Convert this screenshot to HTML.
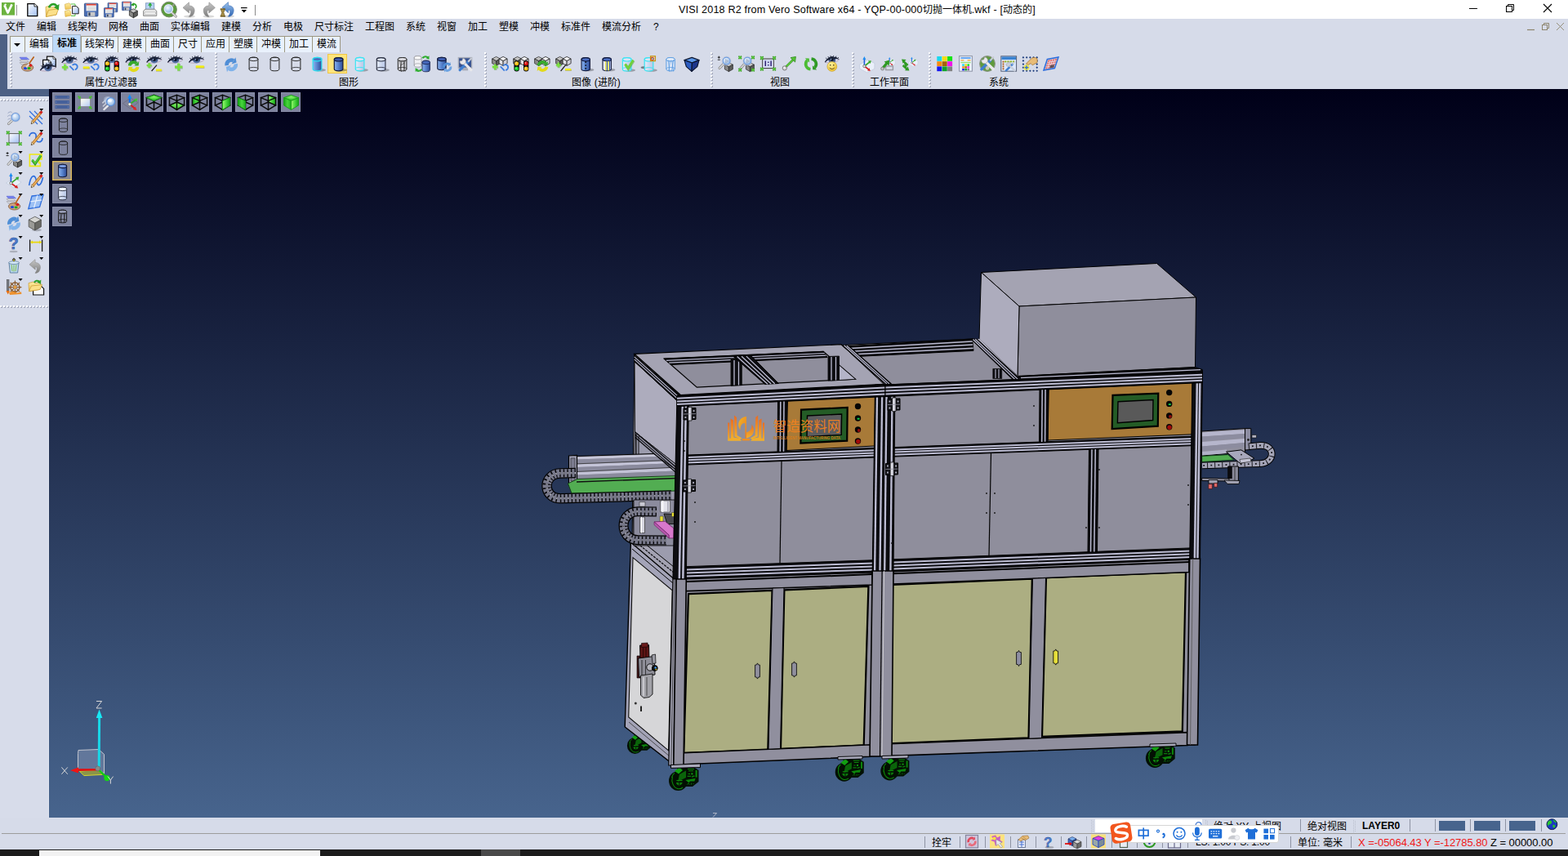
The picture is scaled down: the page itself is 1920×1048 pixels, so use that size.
<!DOCTYPE html><html><head><meta charset="utf-8"><title>VISI</title><style>
*{margin:0;padding:0;box-sizing:border-box}
html,body{width:1920px;height:1048px;overflow:hidden;background:#d6dbe9;font-family:"Liberation Sans",sans-serif;font-size:12px;color:#000}
.abs{position:absolute}
#title{left:0;top:0;width:1920px;height:23px;background:#fff}
#menubar{left:0;top:23px;width:1920px;height:20px;background:#d6dbe9}
.mi{position:absolute;top:26px;font-size:12px;line-height:14px;white-space:nowrap;color:#000}
#stripe{left:0;top:42px;width:9px;height:67px;background:#4d6084}
#band{left:0;top:109px;width:60px;height:9px;background:#4d6084}
#tabs{left:12px;top:44px;height:20px}
.tab{position:absolute;top:44px;height:20px;background:#e9f1fc;border-left:1px solid #9c9782;border-top:1px solid #9c9782;font-size:12px;line-height:18px;text-align:center;white-space:nowrap;overflow:hidden}
.tab.act{top:42px;height:22px;background:#bdd9f8;border:1px solid #a8b6c8;border-bottom:none;font-weight:bold;line-height:20px}
#toolbar{left:9px;top:64px;width:1911px;height:45px;background:#d6dbe9}
.glabel{position:absolute;top:95px;font-size:12px;line-height:13px;white-space:nowrap;transform:translateX(-50%)}
.grip{position:absolute;top:64px;width:2px;height:44px;background-image:repeating-linear-gradient(to bottom,#fff 0,#fff 2px,transparent 2px,transparent 4px)}
.grips{position:absolute;top:65px;width:2px;height:43px;background-image:repeating-linear-gradient(to bottom,#a4a9ba 0,#a4a9ba 2px,transparent 2px,transparent 4px)}
#viewport{left:60px;top:109px;width:1860px;height:892px;background:linear-gradient(to bottom,#000018 0%,#47648d 100%)}
#leftpanel{left:0;top:118px;width:60px;height:883px;background:#d7dcea;border-top:1px solid #e6eaf4;border-right:1px solid #e2e6f1}
.hgrip{position:absolute;left:0;width:58px;height:2px;background-image:repeating-linear-gradient(to right,#fff 0,#fff 2px,transparent 2px,transparent 4px)}
.hgrips{position:absolute;left:1px;width:58px;height:2px;background-image:repeating-linear-gradient(to right,#a4a9ba 0,#a4a9ba 2px,transparent 2px,transparent 4px)}
.vb{position:absolute;width:24px;height:24px;background:#7e839e;box-shadow:inset 0 0 0 1px #8a8fa9}
.vb.act{background:#8a8890;box-shadow:inset 0 0 0 1.5px #d8b65c}
#status{left:0;top:1001px;width:1920px;height:39px;background:#d6dbe9}
#taskbar{left:0;top:1040px;width:1920px;height:8px;background:#1c1c1c}
.st{position:absolute;font-size:13px;line-height:15px;white-space:nowrap}
.sep{position:absolute;width:1px;background:#8e93a3}
.tx{font-family:"Liberation Sans","Noto Sans CJK SC",sans-serif;font-size:12px;fill:#000}
</style></head><body>
<div class="abs" id="title"></div>
<svg class="abs" style="left:0;top:0" width="330" height="23" viewBox="0 0 330 23"><rect x="2" y="3" width="16" height="15.6" fill="#6cb33f"/><path d="M5.4,6.4 L9.6,15.6 L14.6,5.4" stroke="#fff" stroke-width="2.6" fill="none" stroke-linejoin="round"/><circle cx="6.6" cy="5.6" r="1.2" fill="#fff"/><path d="M20.5,6 V19" stroke="#9a9a9a" stroke-width="1"/><path d="M33.8,4.6 H42 L45.8,8 V19.6 H33.8 Z" fill="url(#gDoc)" stroke="#000" stroke-width="1.3"/><path d="M42,4.6 V8 H45.8" fill="#fff" stroke="#000" stroke-width="0.8"/><path d="M56,8.4 L61,7.2 L62.4,9 L70,8.4 L69,18 L56.4,20.4 Z" fill="url(#gFolder)" stroke="#c89a30" stroke-width="0.7"/><path d="M56.4,20.4 L59.4,12.4 L71.6,10.8 L69,18 Z" fill="#fbe08a" stroke="#c89a30" stroke-width="0.7"/><path d="M60,9.4 C61.6,4.8 67,3.6 69.6,7.6" stroke="#2ea02a" stroke-width="2.6" fill="none"/><polygon points="72.6,5 71.8,12.6 66,9" fill="#2ea02a"/><path d="M79.4,5.2 L84.6,3.8 L86.2,5.2 L87,10.6 L80,11.6 Z" fill="url(#gFolder)" stroke="#d2a840" stroke-width="0.6"/><path d="M79.4,13.6 L84.6,12.2 L86.2,13.6 L87,19 L80,20.4 Z" fill="url(#gFolder)" stroke="#d2a840" stroke-width="0.6"/><path d="M86.6,5 H92 V8 M92,16.6 V19.4 H87" stroke="#52c044" stroke-width="1" fill="none"/><path d="M88.6,7.6 H93.6 L96.2,10.2 V16.8 H88.6 Z" fill="url(#gDoc)" stroke="#222" stroke-width="1"/><g transform="translate(103.4,4.2) scale(1.0)"><rect x="0" y="0" width="16.6" height="15.8" rx="1" fill="#4a6eb4" stroke="#2c4680" stroke-width="0.8"/><rect x="2.2" y="0.6" width="12.2" height="8.6" fill="#f4f4f4"/><rect x="2.2" y="0.6" width="12.2" height="1.8" fill="#e04a3a"/><path d="M3.4,4.4 H13.4 M3.4,6.2 H13.4 M3.4,7.8 H13.4" stroke="#b8b8b8" stroke-width="0.6"/><rect x="3.8" y="10.6" width="9.2" height="5" fill="#c8c8c8"/><rect x="5" y="11.2" width="2.2" height="3.8" fill="#2c3c5c"/></g><g transform="translate(132,3.4) scale(0.72)"><rect x="0" y="0" width="16.6" height="15.8" rx="1" fill="#4a6eb4" stroke="#2c4680" stroke-width="0.8"/><rect x="2.2" y="0.6" width="12.2" height="8.6" fill="#f4f4f4"/><rect x="2.2" y="0.6" width="12.2" height="1.8" fill="#e04a3a"/><path d="M3.4,4.4 H13.4 M3.4,6.2 H13.4 M3.4,7.8 H13.4" stroke="#b8b8b8" stroke-width="0.6"/><rect x="3.8" y="10.6" width="9.2" height="5" fill="#c8c8c8"/><rect x="5" y="11.2" width="2.2" height="3.8" fill="#2c3c5c"/></g><g transform="translate(127.4,9.6) scale(0.72)"><rect x="0" y="0" width="16.6" height="15.8" rx="1" fill="#4a6eb4" stroke="#2c4680" stroke-width="0.8"/><rect x="2.2" y="0.6" width="12.2" height="8.6" fill="#f4f4f4"/><rect x="2.2" y="0.6" width="12.2" height="1.8" fill="#e04a3a"/><path d="M3.4,4.4 H13.4 M3.4,6.2 H13.4 M3.4,7.8 H13.4" stroke="#b8b8b8" stroke-width="0.6"/><rect x="3.8" y="10.6" width="9.2" height="5" fill="#c8c8c8"/><rect x="5" y="11.2" width="2.2" height="3.8" fill="#2c3c5c"/></g><g transform="translate(149.4,2) scale(0.68)"><rect x="0" y="0" width="16.6" height="15.8" rx="1" fill="#4a6eb4" stroke="#2c4680" stroke-width="0.8"/><rect x="2.2" y="0.6" width="12.2" height="8.6" fill="#f4f4f4"/><rect x="2.2" y="0.6" width="12.2" height="1.8" fill="#e04a3a"/><path d="M3.4,4.4 H13.4 M3.4,6.2 H13.4 M3.4,7.8 H13.4" stroke="#b8b8b8" stroke-width="0.6"/><rect x="3.8" y="10.6" width="9.2" height="5" fill="#c8c8c8"/><rect x="5" y="11.2" width="2.2" height="3.8" fill="#2c3c5c"/></g><path d="M161.4,6.2 C163.4,3.8 166.2,4.6 166.8,7.2 C167,8.6 166.4,9.8 165.4,10.4" stroke="#2ea02a" stroke-width="1.7" fill="none"/><polygon points="160,6.2 164,3.2 164.2,7.6" fill="#2ea02a"/><g transform="translate(158.4,10.8) scale(1.0)"><polygon points="0,2.6 5,0 10,2.6 5,5.2" fill="#c4c4c4" stroke="#222" stroke-width="0.7"/><polygon points="0,2.6 5,5.2 5,11 0,8.2" fill="#8a8a88" stroke="#222" stroke-width="0.7"/><polygon points="10,2.6 5,5.2 5,11 10,8.2" fill="#5c5c5a" stroke="#222" stroke-width="0.7"/></g><rect x="178.6" y="3.8" width="10.2" height="8.6" fill="#b8d2f6" stroke="#6a86b0" stroke-width="0.7"/><path d="M183.6,9.2 V6.6 H181.6 L183.8,3.4 L186,6.6 H184.2 V9.2 Z" fill="#22c02a" stroke="#148018" stroke-width="0.4"/><path d="M175.6,13.4 L178,11.2 H189.4 L191.8,13.4 V19.4 H175.6 Z" fill="#e6e6e6" stroke="#6e6e6e" stroke-width="0.8"/><rect x="177" y="15" width="13.4" height="2.6" fill="#fafafa" stroke="#9a9a9a" stroke-width="0.5"/><circle cx="207" cy="11.6" r="9.4" fill="#5b9a3c" stroke="#7a8a72" stroke-width="1"/><path d="M210.6,15.6 L215.4,20.2" stroke="#9a9a9a" stroke-width="3" stroke-linecap="round"/><path d="M210.6,15.6 L215.4,20.2" stroke="#e8e8e8" stroke-width="1.2" stroke-linecap="round"/><circle cx="206.4" cy="11" r="5.2" fill="url(#gLens)" stroke="#dfe6f0" stroke-width="1.4"/><path d="M210.4,6.4 L213.4,4.2 L213,8 Z" fill="#9a9a9a"/><g transform="translate(224,2.8)"><ellipse cx="8" cy="17.4" rx="7" ry="1.6" fill="#000" opacity="0.15"/><path d="M0,6.6 L7.4,0 L7.6,4.2 C13.6,4.2 16.2,9.6 12.4,15.6 C9.6,18.2 7.4,17.6 7.4,17.6 C10.6,13.4 10.4,9.6 7.6,9.4 L7.6,13.2 Z" fill="url(#gGreyArrow)" stroke="#8a8a8a" stroke-width="0.6"/></g><g transform="translate(263.4,2.8) scale(-1,1)"><ellipse cx="8" cy="17.4" rx="7" ry="1.6" fill="#000" opacity="0.15"/><path d="M0,6.6 L7.4,0 L7.6,4.2 C13.6,4.2 16.2,9.6 12.4,15.6 C9.6,18.2 7.4,17.6 7.4,17.6 C10.6,13.4 10.4,9.6 7.6,9.4 L7.6,13.2 Z" fill="url(#gGreyArrow)" stroke="#8a8a8a" stroke-width="0.6"/></g><g transform="translate(272,2.6)"><ellipse cx="8" cy="17.4" rx="7" ry="1.6" fill="#000" opacity="0.15"/><path d="M0,6.6 L7.4,0 L7.6,4.2 C13.6,4.2 16.2,9.6 12.4,15.6 C9.6,18.2 7.4,17.6 7.4,17.6 C10.6,13.4 10.4,9.6 7.6,9.4 L7.6,13.2 Z" fill="url(#gBlueArrow)" stroke="#3a6cb4" stroke-width="0.6"/></g><path d="M270.2,11 H275.4 L273.8,15.4 L275.4,20 H270.2 L271.8,15.4 Z" fill="#a8904a" stroke="#6e5a20" stroke-width="0.8"/><path d="M269.6,11 H276 M269.6,20 H276" stroke="#6e5a20" stroke-width="1.2"/><path d="M295,9.6 H302.6" stroke="#000" stroke-width="1.2"/><polygon points="295.6,12 302,12 298.8,15.4" fill="#000"/><path d="M312.5,6 V19" stroke="#8a8a8a" stroke-width="1"/></svg>
<div class="abs" id="t1" style="left:831px;top:4.5px;font-size:12.6px;line-height:15px;white-space:nowrap;letter-spacing:0.16px">VISI 2018 R2 from Vero Software x64 - YQP-00-000</div>
<svg class="abs" style="left:1128px;top:1px" width="65" height="22" viewBox="1128 1 65 22"><text class="tx" x="1130" y="16">切抛一体机</text></svg>
<div class="abs" id="t3" style="left:1189.7px;top:4.5px;font-size:12.6px;line-height:15px;white-space:nowrap;letter-spacing:0.16px">.wkf - [</div>
<svg class="abs" style="left:1226px;top:1px" width="41" height="22" viewBox="1226 1 41 22"><text class="tx" x="1228" y="16">动态的</text></svg>
<div class="abs" id="t5" style="left:1264.3px;top:4.5px;font-size:12.6px;line-height:15px;white-space:nowrap;letter-spacing:0.16px">]</div>
<div class="abs" id="menubar"></div>
<svg class="abs" style="left:5px;top:22px" width="29" height="22" viewBox="5 22 29 22"><text class="tx" x="7" y="37">文件</text></svg>
<svg class="abs" style="left:43px;top:22px" width="29" height="22" viewBox="43 22 29 22"><text class="tx" x="45" y="37">编辑</text></svg>
<svg class="abs" style="left:81px;top:22px" width="41" height="22" viewBox="81 22 41 22"><text class="tx" x="83" y="37">线架构</text></svg>
<svg class="abs" style="left:131px;top:22px" width="29" height="22" viewBox="131 22 29 22"><text class="tx" x="133" y="37">网格</text></svg>
<svg class="abs" style="left:169px;top:22px" width="29" height="22" viewBox="169 22 29 22"><text class="tx" x="171" y="37">曲面</text></svg>
<svg class="abs" style="left:207px;top:22px" width="53" height="22" viewBox="207 22 53 22"><text class="tx" x="209" y="37">实体编辑</text></svg>
<svg class="abs" style="left:269px;top:22px" width="29" height="22" viewBox="269 22 29 22"><text class="tx" x="271" y="37">建模</text></svg>
<svg class="abs" style="left:307px;top:22px" width="29" height="22" viewBox="307 22 29 22"><text class="tx" x="309" y="37">分析</text></svg>
<svg class="abs" style="left:345px;top:22px" width="29" height="22" viewBox="345 22 29 22"><text class="tx" x="347" y="37">电极</text></svg>
<svg class="abs" style="left:383px;top:22px" width="53" height="22" viewBox="383 22 53 22"><text class="tx" x="385" y="37">尺寸标注</text></svg>
<svg class="abs" style="left:445px;top:22px" width="41" height="22" viewBox="445 22 41 22"><text class="tx" x="447" y="37">工程图</text></svg>
<svg class="abs" style="left:495px;top:22px" width="29" height="22" viewBox="495 22 29 22"><text class="tx" x="497" y="37">系统</text></svg>
<svg class="abs" style="left:533px;top:22px" width="29" height="22" viewBox="533 22 29 22"><text class="tx" x="535" y="37">视窗</text></svg>
<svg class="abs" style="left:571px;top:22px" width="29" height="22" viewBox="571 22 29 22"><text class="tx" x="573" y="37">加工</text></svg>
<svg class="abs" style="left:609px;top:22px" width="29" height="22" viewBox="609 22 29 22"><text class="tx" x="611" y="37">塑模</text></svg>
<svg class="abs" style="left:647px;top:22px" width="29" height="22" viewBox="647 22 29 22"><text class="tx" x="649" y="37">冲模</text></svg>
<svg class="abs" style="left:685px;top:22px" width="41" height="22" viewBox="685 22 41 22"><text class="tx" x="687" y="37">标准件</text></svg>
<svg class="abs" style="left:735px;top:22px" width="53" height="22" viewBox="735 22 53 22"><text class="tx" x="737" y="37">模流分析</text></svg>
<div class="mi" style="left:800px">?</div>
<svg class="abs" style="left:0;top:0" width="1920" height="44" viewBox="0 0 1920 44"><path d="M1799,10.5 H1809" stroke="#000" stroke-width="1"/><rect x="1844.5" y="7.5" width="7" height="7" fill="#fff" stroke="#000" stroke-width="1"/><path d="M1846.5,7.5 V5.5 H1853.5 V12.5 H1851.5" fill="none" stroke="#000" stroke-width="1"/><path d="M1890,5 L1900,15 M1900,5 L1890,15" stroke="#000" stroke-width="1.1"/><path d="M1870,36.5 H1879" stroke="#8c846c" stroke-width="1.2"/><rect x="1888.5" y="30.5" width="6" height="6" fill="#d6dbe9" stroke="#8c846c" stroke-width="1"/><path d="M1890.5,30.5 V28.5 H1896.5 V34.5 H1894.5" fill="none" stroke="#8c846c" stroke-width="1"/><path d="M1906,28 L1915,37 M1915,28 L1906,37" stroke="#8c846c" stroke-width="0.9"/></svg>
<div class="abs" id="toolbar"></div>
<div class="abs" id="stripe"></div><div class="abs" id="band"></div>
<div class="tab" style="left:12px;width:18px"><svg width="18" height="19" style="display:block"><path d="M4,8 L12,8 L8,12 Z" fill="#000"/></svg></div>
<div class="tab" style="left:30px;width:34px"></div>
<svg class="abs" style="left:33px;top:43px" width="30" height="22" viewBox="33 43 30 22"><text class="tx" x="36" y="58">编辑</text></svg>
<div class="tab act" style="left:64px;width:35px"></div>
<svg class="abs" style="left:68px;top:42px" width="29" height="22" viewBox="68 42 29 22"><text class="tx" x="70" y="57" font-weight="bold">标准</text></svg>
<div class="tab" style="left:99px;width:45px"></div>
<svg class="abs" style="left:102px;top:43px" width="41" height="22" viewBox="102 43 41 22"><text class="tx" x="104" y="58">线架构</text></svg>
<div class="tab" style="left:144px;width:34px"></div>
<svg class="abs" style="left:147px;top:43px" width="30" height="22" viewBox="147 43 30 22"><text class="tx" x="150" y="58">建模</text></svg>
<div class="tab" style="left:178px;width:34px"></div>
<svg class="abs" style="left:181px;top:43px" width="30" height="22" viewBox="181 43 30 22"><text class="tx" x="184" y="58">曲面</text></svg>
<div class="tab" style="left:212px;width:34px"></div>
<svg class="abs" style="left:215px;top:43px" width="30" height="22" viewBox="215 43 30 22"><text class="tx" x="218" y="58">尺寸</text></svg>
<div class="tab" style="left:246px;width:34px"></div>
<svg class="abs" style="left:249px;top:43px" width="30" height="22" viewBox="249 43 30 22"><text class="tx" x="252" y="58">应用</text></svg>
<div class="tab" style="left:280px;width:34px"></div>
<svg class="abs" style="left:283px;top:43px" width="30" height="22" viewBox="283 43 30 22"><text class="tx" x="286" y="58">塑膜</text></svg>
<div class="tab" style="left:314px;width:34px"></div>
<svg class="abs" style="left:317px;top:43px" width="30" height="22" viewBox="317 43 30 22"><text class="tx" x="320" y="58">冲模</text></svg>
<div class="tab" style="left:348px;width:34px"></div>
<svg class="abs" style="left:351px;top:43px" width="30" height="22" viewBox="351 43 30 22"><text class="tx" x="354" y="58">加工</text></svg>
<div class="tab" style="left:382px;width:34px"></div>
<svg class="abs" style="left:385px;top:43px" width="30" height="22" viewBox="385 43 30 22"><text class="tx" x="388" y="58">模流</text></svg>
<div class="abs" style="left:416px;top:44px;width:1px;height:20px;background:#9c9782"></div>
<div class="grips" style="left:13px"></div><div class="grip" style="left:12px"></div>
<div class="grips" style="left:264px"></div><div class="grip" style="left:263px"></div>
<div class="grips" style="left:594px"></div><div class="grip" style="left:593px"></div>
<div class="grips" style="left:871px"></div><div class="grip" style="left:870px"></div>
<div class="grips" style="left:1044px"></div><div class="grip" style="left:1043px"></div>
<div class="grips" style="left:1138px"></div><div class="grip" style="left:1137px"></div>
<svg class="abs" style="left:102px;top:90px" width="69" height="22" viewBox="102 90 69 22"><text class="tx" y="105"><tspan x="104">属性</tspan><tspan x="128.33">/</tspan><tspan x="132">过滤器</tspan></text></svg>
<svg class="abs" style="left:413px;top:90px" width="29" height="22" viewBox="413 90 29 22"><text class="tx" x="415" y="105">图形</text></svg>
<svg class="abs" style="left:698px;top:90px" width="65" height="22" viewBox="698 90 65 22"><text class="tx" y="105"><tspan x="700">图像</tspan><tspan x="727.67">(</tspan><tspan x="732">进阶</tspan><tspan x="755.67">)</tspan></text></svg>
<svg class="abs" style="left:941px;top:90px" width="29" height="22" viewBox="941 90 29 22"><text class="tx" x="943" y="105">视图</text></svg>
<svg class="abs" style="left:1063px;top:90px" width="53" height="22" viewBox="1063 90 53 22"><text class="tx" x="1065" y="105">工作平面</text></svg>
<svg class="abs" style="left:1209px;top:90px" width="29" height="22" viewBox="1209 90 29 22"><text class="tx" x="1211" y="105">系统</text></svg>
<svg width="0" height="0" style="position:absolute"><defs>
<linearGradient id="gBlueCyl" x1="0" x2="1" y1="0" y2="0"><stop offset="0" stop-color="#8db4ee"/><stop offset="0.45" stop-color="#5a86d0"/><stop offset="1" stop-color="#2d4a94"/></linearGradient>
<linearGradient id="gLightCyl" x1="0" x2="1" y1="0" y2="0"><stop offset="0" stop-color="#e4ebf8"/><stop offset="1" stop-color="#b7c6e6"/></linearGradient>
<linearGradient id="gDoc" x1="0" x2="1" y1="0" y2="1"><stop offset="0" stop-color="#ffffff"/><stop offset="1" stop-color="#9fbdf2"/></linearGradient>
<linearGradient id="gFolder" x1="0" x2="0" y1="0" y2="1"><stop offset="0" stop-color="#fdeea6"/><stop offset="1" stop-color="#f0c24c"/></linearGradient>
<linearGradient id="gGreyArrow" x1="0" x2="0" y1="0" y2="1"><stop offset="0" stop-color="#c9c9c9"/><stop offset="1" stop-color="#7c7c7c"/></linearGradient>
<linearGradient id="gBlueArrow" x1="0" x2="0" y1="0" y2="1"><stop offset="0" stop-color="#9cc4ee"/><stop offset="1" stop-color="#2f66b4"/></linearGradient>
<radialGradient id="gLens" cx="0.4" cy="0.35" r="0.7"><stop offset="0" stop-color="#f4f9ff"/><stop offset="1" stop-color="#86b0e2"/></radialGradient>
<radialGradient id="gSmile" cx="0.4" cy="0.3" r="0.8"><stop offset="0" stop-color="#fff6a0"/><stop offset="1" stop-color="#e8b820"/></radialGradient>
<linearGradient id="gGreenCube" x1="0" x2="1" y1="0" y2="1"><stop offset="0" stop-color="#5cf05c"/><stop offset="1" stop-color="#0fa010"/></linearGradient>
<linearGradient id="gEyeIris" x1="0" x2="0" y1="0" y2="1"><stop offset="0" stop-color="#1f2c4c"/><stop offset="1" stop-color="#5c7cb4"/></linearGradient>
</defs></svg><svg class="abs" style="left:0;top:0" width="1920" height="110" viewBox="0 0 1920 110"><g transform="translate(23,68)"><path d="M1,2.2 L9.5,2.2 L12.5,4.8 L3.2,4.8 Z" fill="#6f7df2" stroke="#4c57c8" stroke-width="0.5"/><path d="M1.2,5.6 L9.8,5.6 L12,7.8 L3,7.8 Z" fill="#e6e6ea" stroke="#7a7a80" stroke-width="0.5"/><path d="M1.2,8.6 L9.8,8.6 L11.6,10.8 L3,10.8 Z" fill="#e6e6ea" stroke="#7a7a80" stroke-width="0.5"/><ellipse cx="10.6" cy="14.6" rx="7.2" ry="4.6" fill="#c9a07c" stroke="#7d5a40" stroke-width="0.8"/><ellipse cx="14.4" cy="12" rx="2" ry="1.7" fill="#d81d1d"/><ellipse cx="8" cy="15.6" rx="2.1" ry="1.6" fill="#1d46e0"/><ellipse cx="12.6" cy="15.6" rx="2" ry="1.5" fill="#16b01c"/><path d="M18.2,2 L11.6,11.4" stroke="#b8631c" stroke-width="1.7" stroke-linecap="round"/><path d="M12,10.8 L9.6,13.6" stroke="#d9d9df" stroke-width="2" stroke-linecap="round"/></g><g transform="translate(49,68)"><path d="M8.5,1.2 H16 L19.2,4.2 V14 H8.5 Z" fill="url(#gDoc)" stroke="#111" stroke-width="1.3"/><path d="M16,1.2 V4.2 H19.2" fill="#fff" stroke="#111" stroke-width="0.7"/><path d="M3.6,5.4 H10.4 L13.4,8.2 V16 H3.6 Z" fill="url(#gDoc)" stroke="#111" stroke-width="1.3"/><path d="M10.4,5.4 V8.2 H13.4" fill="#fff" stroke="#111" stroke-width="0.7"/><g transform="translate(0,10.2) scale(1.0,1.035294117647059)"><path d="M0.3,7.6 C4,1.2 14,-0.4 19.6,4.2 C15.5,8.8 5,9.4 0.3,7.6 Z" fill="#d6d8ee" stroke="#9a7488" stroke-width="0.5"/><ellipse cx="9.9" cy="4.7" rx="4.7" ry="4" fill="url(#gEyeIris)"/><ellipse cx="9.9" cy="4.4" rx="1.9" ry="1.8" fill="#0c1424"/><path d="M0.3,7.6 C3.6,0.2 14.4,-2 19.8,4.2 C15,2.4 6.4,3 0.3,7.6 Z" fill="#1a2238"/><path d="M0.3,7.6 C4,1.8 8,0.6 11,0.6" stroke="#1a2238" stroke-width="1.2" fill="none"/><path d="M2.5,3.6 L1.6,1.8 M5,1.8 L4.4,0 M8,0.8 L7.8,-1 M11.5,0.6 L11.9,-1.1 M14.6,1.2 L15.6,-0.4 M17.4,2.5 L18.9,1.2" stroke="#1a2238" stroke-width="0.9"/><circle cx="8.4" cy="3.8" r="0.8" fill="#a8c0ee"/></g></g><g transform="translate(75,68)"><g transform="translate(0.5,1.2) scale(0.975,0.9882352941176471)"><path d="M0.3,7.6 C4,1.2 14,-0.4 19.6,4.2 C15.5,8.8 5,9.4 0.3,7.6 Z" fill="#d6d8ee" stroke="#9a7488" stroke-width="0.5"/><ellipse cx="9.9" cy="4.7" rx="4.7" ry="4" fill="url(#gEyeIris)"/><ellipse cx="9.9" cy="4.4" rx="1.9" ry="1.8" fill="#0c1424"/><path d="M0.3,7.6 C3.6,0.2 14.4,-2 19.8,4.2 C15,2.4 6.4,3 0.3,7.6 Z" fill="#1a2238"/><path d="M0.3,7.6 C4,1.8 8,0.6 11,0.6" stroke="#1a2238" stroke-width="1.2" fill="none"/><path d="M2.5,3.6 L1.6,1.8 M5,1.8 L4.4,0 M8,0.8 L7.8,-1 M11.5,0.6 L11.9,-1.1 M14.6,1.2 L15.6,-0.4 M17.4,2.5 L18.9,1.2" stroke="#1a2238" stroke-width="0.9"/><circle cx="8.4" cy="3.8" r="0.8" fill="#a8c0ee"/></g><path d="M0.8000000000000003,14.2 H8.0 M4.4,10.6 V17.8" stroke="#3c7d16" stroke-width="3.3" opacity="0.35" transform="translate(0.6,0.7)"/><path d="M0.8000000000000003,14.2 H8.0 M4.4,10.6 V17.8" stroke="#7be040" stroke-width="2.4"/><g transform="translate(10.4,9.6)"><path d="M0,3.2 L5,8.4" stroke="#3b7de0" stroke-width="1.8" fill="none"/><path d="M3.2,2.2 C6.5,-0.8 10.4,2 9,5.6 C8.4,7 7.4,7.6 6.4,7.8" stroke="#3b7de0" stroke-width="1.8" fill="none"/></g></g><g transform="translate(101,68)"><g transform="translate(0.5,1.6) scale(0.975,0.9411764705882353)"><path d="M0.3,7.6 C4,1.2 14,-0.4 19.6,4.2 C15.5,8.8 5,9.4 0.3,7.6 Z" fill="#d6d8ee" stroke="#9a7488" stroke-width="0.5"/><ellipse cx="9.9" cy="4.7" rx="4.7" ry="4" fill="url(#gEyeIris)"/><ellipse cx="9.9" cy="4.4" rx="1.9" ry="1.8" fill="#0c1424"/><path d="M0.3,7.6 C3.6,0.2 14.4,-2 19.8,4.2 C15,2.4 6.4,3 0.3,7.6 Z" fill="#1a2238"/><path d="M0.3,7.6 C4,1.8 8,0.6 11,0.6" stroke="#1a2238" stroke-width="1.2" fill="none"/><path d="M2.5,3.6 L1.6,1.8 M5,1.8 L4.4,0 M8,0.8 L7.8,-1 M11.5,0.6 L11.9,-1.1 M14.6,1.2 L15.6,-0.4 M17.4,2.5 L18.9,1.2" stroke="#1a2238" stroke-width="0.9"/><circle cx="8.4" cy="3.8" r="0.8" fill="#a8c0ee"/></g><path d="M0.7999999999999998,15.5 H8.999999999999998" stroke="#9a9210" stroke-width="2.4" opacity="0.5"/><path d="M0.7999999999999998,14.6 H8.399999999999999" stroke="#f2ee10" stroke-width="2.4"/><g transform="translate(10.4,9.6)"><path d="M0,3.2 L5,8.4" stroke="#3b7de0" stroke-width="1.8" fill="none"/><path d="M3.2,2.2 C6.5,-0.8 10.4,2 9,5.6 C8.4,7 7.4,7.6 6.4,7.8" stroke="#3b7de0" stroke-width="1.8" fill="none"/></g></g><g transform="translate(127,68)"><g transform="translate(1.5,1.2) scale(0.85,0.8941176470588235)"><path d="M0.3,7.6 C4,1.2 14,-0.4 19.6,4.2 C15.5,8.8 5,9.4 0.3,7.6 Z" fill="#d6d8ee" stroke="#9a7488" stroke-width="0.5"/><ellipse cx="9.9" cy="4.7" rx="4.7" ry="4" fill="url(#gEyeIris)"/><ellipse cx="9.9" cy="4.4" rx="1.9" ry="1.8" fill="#0c1424"/><path d="M0.3,7.6 C3.6,0.2 14.4,-2 19.8,4.2 C15,2.4 6.4,3 0.3,7.6 Z" fill="#1a2238"/><path d="M0.3,7.6 C4,1.8 8,0.6 11,0.6" stroke="#1a2238" stroke-width="1.2" fill="none"/><path d="M2.5,3.6 L1.6,1.8 M5,1.8 L4.4,0 M8,0.8 L7.8,-1 M11.5,0.6 L11.9,-1.1 M14.6,1.2 L15.6,-0.4 M17.4,2.5 L18.9,1.2" stroke="#1a2238" stroke-width="0.9"/><circle cx="8.4" cy="3.8" r="0.8" fill="#a8c0ee"/></g><rect x="1.2" y="6.2" width="6.4" height="13.4" rx="3" fill="#0c0c0c"/><circle cx="4.4" cy="9.7" r="2.5" fill="#f6c010"/><circle cx="3.8" cy="9.0" r="0.9" fill="#fff" opacity="0.55"/><circle cx="4.4" cy="16.1" r="2.5" fill="#10d020"/><circle cx="3.8" cy="15.4" r="0.9" fill="#fff" opacity="0.55"/><rect x="12.6" y="6.2" width="6.4" height="13.4" rx="3" fill="#0c0c0c"/><circle cx="15.8" cy="9.7" r="2.5" fill="#e01010"/><circle cx="15.2" cy="9.0" r="0.9" fill="#fff" opacity="0.55"/><circle cx="15.8" cy="16.1" r="2.5" fill="#f6c010"/><circle cx="15.2" cy="15.4" r="0.9" fill="#fff" opacity="0.55"/></g><g transform="translate(153,68)"><g transform="translate(0.6,1.2) scale(0.93,0.9411764705882353)"><path d="M0.3,7.6 C4,1.2 14,-0.4 19.6,4.2 C15.5,8.8 5,9.4 0.3,7.6 Z" fill="#d6d8ee" stroke="#9a7488" stroke-width="0.5"/><ellipse cx="9.9" cy="4.7" rx="4.7" ry="4" fill="url(#gEyeIris)"/><ellipse cx="9.9" cy="4.4" rx="1.9" ry="1.8" fill="#0c1424"/><path d="M0.3,7.6 C3.6,0.2 14.4,-2 19.8,4.2 C15,2.4 6.4,3 0.3,7.6 Z" fill="#1a2238"/><path d="M0.3,7.6 C4,1.8 8,0.6 11,0.6" stroke="#1a2238" stroke-width="1.2" fill="none"/><path d="M2.5,3.6 L1.6,1.8 M5,1.8 L4.4,0 M8,0.8 L7.8,-1 M11.5,0.6 L11.9,-1.1 M14.6,1.2 L15.6,-0.4 M17.4,2.5 L18.9,1.2" stroke="#1a2238" stroke-width="0.9"/><circle cx="8.4" cy="3.8" r="0.8" fill="#a8c0ee"/></g><g transform="rotate(-12 10.6 13.2)"><path d="M5.90,11.49 A5.0,5.0 0 0 1 14.93,10.70" fill="none" stroke="#35a82c" stroke-width="3.8"/><polygon points="18.39,8.70 11.47,12.70 16.64,13.66" fill="#35a82c"/><path d="M15.30,14.91 A5.0,5.0 0 0 1 6.27,15.70" fill="none" stroke="#e2da18" stroke-width="3.8"/><polygon points="2.81,17.70 9.73,13.71 4.56,12.74" fill="#e2da18"/></g></g><g transform="translate(179,68)"><g transform="translate(0.4,1.2) scale(0.96,0.9411764705882353)"><path d="M0.3,7.6 C4,1.2 14,-0.4 19.6,4.2 C15.5,8.8 5,9.4 0.3,7.6 Z" fill="#d6d8ee" stroke="#9a7488" stroke-width="0.5"/><ellipse cx="9.9" cy="4.7" rx="4.7" ry="4" fill="url(#gEyeIris)"/><ellipse cx="9.9" cy="4.4" rx="1.9" ry="1.8" fill="#0c1424"/><path d="M0.3,7.6 C3.6,0.2 14.4,-2 19.8,4.2 C15,2.4 6.4,3 0.3,7.6 Z" fill="#1a2238"/><path d="M0.3,7.6 C4,1.8 8,0.6 11,0.6" stroke="#1a2238" stroke-width="1.2" fill="none"/><path d="M2.5,3.6 L1.6,1.8 M5,1.8 L4.4,0 M8,0.8 L7.8,-1 M11.5,0.6 L11.9,-1.1 M14.6,1.2 L15.6,-0.4 M17.4,2.5 L18.9,1.2" stroke="#1a2238" stroke-width="0.9"/><circle cx="8.4" cy="3.8" r="0.8" fill="#a8c0ee"/></g><path d="M0.6000000000000001,12 H6.6 M3.6,9.0 V15.0" stroke="#3c7d16" stroke-width="3.1" opacity="0.35" transform="translate(0.6,0.7)"/><path d="M0.6000000000000001,12 H6.6 M3.6,9.0 V15.0" stroke="#7be040" stroke-width="2.2"/><path d="M6.6,19 L13,11.6" stroke="#222" stroke-width="1.2"/><path d="M12.0,18.5 H19.400000000000002" stroke="#9a9210" stroke-width="2.2" opacity="0.5"/><path d="M12.0,17.6 H18.8" stroke="#f2ee10" stroke-width="2.2"/></g><g transform="translate(205,68)"><g transform="translate(0.2,1.2) scale(0.96,0.9411764705882353)"><path d="M0.3,7.6 C4,1.2 14,-0.4 19.6,4.2 C15.5,8.8 5,9.4 0.3,7.6 Z" fill="#d6d8ee" stroke="#9a7488" stroke-width="0.5"/><ellipse cx="9.9" cy="4.7" rx="4.7" ry="4" fill="url(#gEyeIris)"/><ellipse cx="9.9" cy="4.4" rx="1.9" ry="1.8" fill="#0c1424"/><path d="M0.3,7.6 C3.6,0.2 14.4,-2 19.8,4.2 C15,2.4 6.4,3 0.3,7.6 Z" fill="#1a2238"/><path d="M0.3,7.6 C4,1.8 8,0.6 11,0.6" stroke="#1a2238" stroke-width="1.2" fill="none"/><path d="M2.5,3.6 L1.6,1.8 M5,1.8 L4.4,0 M8,0.8 L7.8,-1 M11.5,0.6 L11.9,-1.1 M14.6,1.2 L15.6,-0.4 M17.4,2.5 L18.9,1.2" stroke="#1a2238" stroke-width="0.9"/><circle cx="8.4" cy="3.8" r="0.8" fill="#a8c0ee"/></g><path d="M9.0,14 H18.2 M13.6,9.4 V18.6" stroke="#3c7d16" stroke-width="3.6999999999999997" opacity="0.35" transform="translate(0.6,0.7)"/><path d="M9.0,14 H18.2 M13.6,9.4 V18.6" stroke="#7be040" stroke-width="2.8"/></g><g transform="translate(231,68)"><g transform="translate(0.2,1.2) scale(0.96,0.9411764705882353)"><path d="M0.3,7.6 C4,1.2 14,-0.4 19.6,4.2 C15.5,8.8 5,9.4 0.3,7.6 Z" fill="#d6d8ee" stroke="#9a7488" stroke-width="0.5"/><ellipse cx="9.9" cy="4.7" rx="4.7" ry="4" fill="url(#gEyeIris)"/><ellipse cx="9.9" cy="4.4" rx="1.9" ry="1.8" fill="#0c1424"/><path d="M0.3,7.6 C3.6,0.2 14.4,-2 19.8,4.2 C15,2.4 6.4,3 0.3,7.6 Z" fill="#1a2238"/><path d="M0.3,7.6 C4,1.8 8,0.6 11,0.6" stroke="#1a2238" stroke-width="1.2" fill="none"/><path d="M2.5,3.6 L1.6,1.8 M5,1.8 L4.4,0 M8,0.8 L7.8,-1 M11.5,0.6 L11.9,-1.1 M14.6,1.2 L15.6,-0.4 M17.4,2.5 L18.9,1.2" stroke="#1a2238" stroke-width="0.9"/><circle cx="8.4" cy="3.8" r="0.8" fill="#a8c0ee"/></g><path d="M8.8,14.5 H19.400000000000002" stroke="#9a9210" stroke-width="2.6" opacity="0.5"/><path d="M8.8,13.6 H18.8" stroke="#f2ee10" stroke-width="2.6"/></g><g transform="translate(273,68)"><g transform="rotate(-30 10.2 11.2)"><path d="M4.94,9.28 A5.6,5.6 0 0 1 15.05,8.40" fill="none" stroke="#4f8ed6" stroke-width="4.6"/><polygon points="19.23,5.98 10.87,10.81 17.12,11.99" fill="#4f8ed6"/><path d="M15.46,13.12 A5.6,5.6 0 0 1 5.35,14.00" fill="none" stroke="#7fb2ea" stroke-width="4.6"/><polygon points="1.17,16.41 9.53,11.58 3.28,10.41" fill="#7fb2ea"/></g></g><g transform="translate(300.5,68)"><path d="M4.6,4.4 V16.6 A5.4,2.2 0 0 0 15.4,16.6 V4.4 A5.4,2.2 0 0 0 4.6,4.4 Z" fill="none" stroke="#222" stroke-width="1.0"/><ellipse cx="10.0" cy="4.4" rx="5.4" ry="2.2" fill="none" stroke="#222" stroke-width="1.0"/><path d="M4.6,16.6 A5.4,2.2 0 0 1 15.4,16.6" fill="none" stroke="#222" stroke-width="0.8"/></g><g transform="translate(326.5,68)"><path d="M4.6,4.4 V16.6 A5.4,2.2 0 0 0 15.4,16.6 V4.4 A5.4,2.2 0 0 0 4.6,4.4 Z" fill="none" stroke="#222" stroke-width="1.0"/><ellipse cx="10.0" cy="4.4" rx="5.4" ry="2.2" fill="none" stroke="#222" stroke-width="1.0"/></g><g transform="translate(352.5,68)"><path d="M4.6,4.4 V16.6 A5.4,2.2 0 0 0 15.4,16.6 V4.4 A5.4,2.2 0 0 0 4.6,4.4 Z" fill="none" stroke="#222" stroke-width="1.0"/><ellipse cx="10.0" cy="4.4" rx="5.4" ry="2.2" fill="none" stroke="#222" stroke-width="1.0"/><path d="M4.6,16.6 A5.4,2.2 0 0 1 15.4,16.6" fill="none" stroke="#222" stroke-width="0.8"/></g><g transform="translate(378.5,68)"><ellipse cx="13.5" cy="17.799999999999997" rx="6.9" ry="1.7600000000000002" fill="#000" opacity="0.28"/><path d="M4.6,4.6 V16.599999999999998 A5.4,2.2 0 0 0 15.4,16.599999999999998 V4.6 A5.4,2.2 0 0 0 4.6,4.6 Z" fill="url(#gBlueCyl)" stroke="#28e0f0" stroke-width="1.2"/><ellipse cx="10.0" cy="4.6" rx="5.4" ry="2.2" fill="#4a6fc0" stroke="#28e0f0" stroke-width="1.2"/></g><rect x="401.5" y="66.5" width="23" height="23" fill="#fde57c" stroke="#f0c648" stroke-width="1"/><g transform="translate(404.5,68)"><ellipse cx="13.6" cy="17.8" rx="6.8" ry="1.7600000000000002" fill="#000" opacity="0.28"/><path d="M4.8,4.800000000000001 V16.6 A5.3,2.2 0 0 0 15.399999999999999,16.6 V4.800000000000001 A5.3,2.2 0 0 0 4.8,4.800000000000001 Z" fill="url(#gBlueCyl)" stroke="#10183a" stroke-width="1.2"/><ellipse cx="10.1" cy="4.800000000000001" rx="5.3" ry="2.2" fill="#3e5cae" stroke="#10183a" stroke-width="1.2"/></g><g transform="translate(430.5,68)"><ellipse cx="13.6" cy="17.799999999999997" rx="6.8" ry="1.7600000000000002" fill="#000" opacity="0.28"/><path d="M4.8,4.6 V16.599999999999998 A5.3,2.2 0 0 0 15.399999999999999,16.599999999999998 V4.6 A5.3,2.2 0 0 0 4.8,4.6 Z" fill="url(#gLightCyl)" stroke="#38e4f2" stroke-width="1.2"/><ellipse cx="10.1" cy="4.6" rx="5.3" ry="2.2" fill="#dbe4f6" stroke="#38e4f2" stroke-width="1.2"/><path d="M4.8,16.599999999999998 A5.3,2.2 0 0 1 15.399999999999999,16.599999999999998" fill="none" stroke="#38e4f2" stroke-width="0.96"/></g><g transform="translate(456.5,68)"><ellipse cx="13.6" cy="17.8" rx="6.8" ry="1.7600000000000002" fill="#000" opacity="0.28"/><path d="M4.8,4.800000000000001 V16.6 A5.3,2.2 0 0 0 15.399999999999999,16.6 V4.800000000000001 A5.3,2.2 0 0 0 4.8,4.800000000000001 Z" fill="url(#gLightCyl)" stroke="#2a2f40" stroke-width="1.1"/><ellipse cx="10.1" cy="4.800000000000001" rx="5.3" ry="2.2" fill="#dbe4f6" stroke="#2a2f40" stroke-width="1.1"/><path d="M4.8,16.6 A5.3,2.2 0 0 1 15.399999999999999,16.6" fill="none" stroke="#2a2f40" stroke-width="0.8800000000000001"/></g><g transform="translate(482.5,68)"><path d="M4.8,4.800000000000001 V16.6 A5.3,2.2 0 0 0 15.399999999999999,16.6 V4.800000000000001 A5.3,2.2 0 0 0 4.8,4.800000000000001 Z" fill="#d8d8de" stroke="#222" stroke-width="1.0"/><ellipse cx="10.1" cy="4.800000000000001" rx="5.3" ry="2.2" fill="#e8e8ee" stroke="#222" stroke-width="1.0"/><path d="M4.8,16.6 A5.3,2.2 0 0 1 15.399999999999999,16.6" fill="none" stroke="#222" stroke-width="0.8"/><path d="M7,5 L9,20 M9.6,5.4 L7.6,19 M11.4,5.4 L13.6,19.6 M13.6,5 L11.4,19.4 M8.4,12 L12.6,9" stroke="#333" stroke-width="0.7" fill="none"/></g><g transform="translate(507,68)"><path d="M0.2,2.8000000000000003 V12.0 A4.4,2.2 0 0 0 9.0,12.0 V2.8000000000000003 A4.4,2.2 0 0 0 0.2,2.8000000000000003 Z" fill="#f1f1f4" stroke="#9a9aa0" stroke-width="0.9"/><ellipse cx="4.6000000000000005" cy="2.8000000000000003" rx="4.4" ry="2.2" fill="#fafafa" stroke="#9a9aa0" stroke-width="0.9"/><path d="M0.2,12.0 A4.4,2.2 0 0 1 9.0,12.0" fill="none" stroke="#9a9aa0" stroke-width="0.7200000000000001"/><path d="M10.4,3.2 C12,0.6 15.4,0.8 17.2,2.6" stroke="#2fae2f" stroke-width="2.2" fill="none"/><polygon points="18.6,0.2 18.4,5 14.6,3.2" fill="#2fae2f"/><path d="M9.4,16.8 C7.6,19.4 4.4,19.2 2.8,17.6" stroke="#2fae2f" stroke-width="2.2" fill="none"/><polygon points="1.6,20 1.6,15.2 5.4,17" fill="#2fae2f"/><path d="M10,8.4 V17.6 A4.7,2.2 0 0 0 19.4,17.6 V8.4 A4.7,2.2 0 0 0 10,8.4 Z" fill="url(#gBlueCyl)" stroke="#1a2450" stroke-width="0.9"/><ellipse cx="14.7" cy="8.4" rx="4.7" ry="2.2" fill="#4466b8" stroke="#1a2450" stroke-width="0.9"/></g><g transform="translate(534.5,68)"><path d="M1.2,4.4 V15.600000000000001 A5.2,2.2 0 0 0 11.6,15.600000000000001 V4.4 A5.2,2.2 0 0 0 1.2,4.4 Z" fill="url(#gBlueCyl)" stroke="#10183a" stroke-width="1.1"/><ellipse cx="6.4" cy="4.4" rx="5.2" ry="2.2" fill="#3e5cae" stroke="#10183a" stroke-width="1.1"/><g transform="rotate(-30 13.2 14.2)"><path d="M9.25,12.76 A4.2,4.2 0 0 1 16.84,12.10" fill="none" stroke="#4f8ed6" stroke-width="2.8"/><polygon points="19.38,10.63 14.29,13.57 18.10,14.28" fill="#4f8ed6"/><path d="M17.15,15.64 A4.2,4.2 0 0 1 9.56,16.30" fill="none" stroke="#6ea4e2" stroke-width="2.8"/><polygon points="7.02,17.77 12.11,14.83 8.30,14.12" fill="#6ea4e2"/></g></g><g transform="translate(560,68)"><rect x="1.4" y="2.6" width="16.2" height="12.6" fill="#35508f" stroke="#a9adb8" stroke-width="1.4"/><rect x="6" y="15.8" width="7" height="2.6" fill="#a9adb8"/><g transform="translate(10,10.8) scale(1.25)"><path d="M-5.5,5.5 L3,-3" stroke="#3f7fd0" stroke-width="2.6" stroke-linecap="round"/><path d="M3,-3 L5.6,-5.8" stroke="#c8ccd4" stroke-width="1.6" stroke-linecap="round"/><path d="M5.5,5.5 L-2.5,-2.5" stroke="#e9e9ec" stroke-width="2.6" stroke-linecap="round"/><path d="M-5.6,-3.2 A3,3 0 1 0 -2.6,-5.8 L-3.4,-3.6 Z" fill="#e9e9ec" stroke="#9a9aa2" stroke-width="0.5"/></g></g><g transform="translate(602,68)"><g transform="translate(0.6,1.4) scale(1.0)"><polygon points="0,2.6 5,0 10,2.6 5,5.2" fill="#c4c4c4" stroke="#222" stroke-width="0.7"/><polygon points="0,2.6 5,5.2 5,11 0,8.2" fill="#8a8a88" stroke="#222" stroke-width="0.7"/><polygon points="10,2.6 5,5.2 5,11 10,8.2" fill="#5c5c5a" stroke="#222" stroke-width="0.7"/></g><g transform="translate(9.1,1.4) scale(1.0)"><polygon points="0,2.6 5,0 10,2.6 5,5.2" fill="#f4f4f6" stroke="#222" stroke-width="0.8"/><polygon points="0,2.6 5,5.2 5,11 0,8.2" fill="#e2e2e8" stroke="#222" stroke-width="0.8"/><polygon points="10,2.6 5,5.2 5,11 10,8.2" fill="#cfcfd8" stroke="#222" stroke-width="0.8"/></g><path d="M0.8000000000000003,13.8 H7.6 M4.2,10.4 V17.2" stroke="#3c7d16" stroke-width="3.3" opacity="0.35" transform="translate(0.6,0.7)"/><path d="M0.8000000000000003,13.8 H7.6 M4.2,10.4 V17.2" stroke="#7be040" stroke-width="2.4"/><g transform="translate(10.8,10.2)"><path d="M0,3.2 L5,8.4" stroke="#3b7de0" stroke-width="1.8" fill="none"/><path d="M3.2,2.2 C6.5,-0.8 10.4,2 9,5.6 C8.4,7 7.4,7.6 6.4,7.8" stroke="#3b7de0" stroke-width="1.8" fill="none"/></g></g><g transform="translate(628,68)"><g transform="translate(0.6,1.4) scale(1.0)"><polygon points="0,2.6 5,0 10,2.6 5,5.2" fill="#c4c4c4" stroke="#222" stroke-width="0.7"/><polygon points="0,2.6 5,5.2 5,11 0,8.2" fill="#8a8a88" stroke="#222" stroke-width="0.7"/><polygon points="10,2.6 5,5.2 5,11 10,8.2" fill="#5c5c5a" stroke="#222" stroke-width="0.7"/></g><g transform="translate(9.1,1.4) scale(1.0)"><polygon points="0,2.6 5,0 10,2.6 5,5.2" fill="#f4f4f6" stroke="#222" stroke-width="0.8"/><polygon points="0,2.6 5,5.2 5,11 0,8.2" fill="#e2e2e8" stroke="#222" stroke-width="0.8"/><polygon points="10,2.6 5,5.2 5,11 10,8.2" fill="#cfcfd8" stroke="#222" stroke-width="0.8"/></g><rect x="1.4" y="6.2" width="6.4" height="13.4" rx="3" fill="#0c0c0c"/><circle cx="4.6" cy="9.7" r="2.5" fill="#f6c010"/><circle cx="4.0" cy="9.0" r="0.9" fill="#fff" opacity="0.55"/><circle cx="4.6" cy="16.1" r="2.5" fill="#10d020"/><circle cx="4.0" cy="15.4" r="0.9" fill="#fff" opacity="0.55"/><rect x="13" y="6.2" width="6.4" height="13.4" rx="3" fill="#0c0c0c"/><circle cx="16.2" cy="9.7" r="2.5" fill="#e01010"/><circle cx="15.6" cy="9.0" r="0.9" fill="#fff" opacity="0.55"/><circle cx="16.2" cy="16.1" r="2.5" fill="#f6c010"/><circle cx="15.6" cy="15.4" r="0.9" fill="#fff" opacity="0.55"/></g><g transform="translate(654,68)"><g transform="translate(0.6,1.4) scale(1.0)"><polygon points="0,2.6 5,0 10,2.6 5,5.2" fill="#c4c4c4" stroke="#222" stroke-width="0.7"/><polygon points="0,2.6 5,5.2 5,11 0,8.2" fill="#8a8a88" stroke="#222" stroke-width="0.7"/><polygon points="10,2.6 5,5.2 5,11 10,8.2" fill="#5c5c5a" stroke="#222" stroke-width="0.7"/></g><g transform="translate(9.1,1.4) scale(1.0)"><polygon points="0,2.6 5,0 10,2.6 5,5.2" fill="#f4f4f6" stroke="#222" stroke-width="0.8"/><polygon points="0,2.6 5,5.2 5,11 0,8.2" fill="#e2e2e8" stroke="#222" stroke-width="0.8"/><polygon points="10,2.6 5,5.2 5,11 10,8.2" fill="#cfcfd8" stroke="#222" stroke-width="0.8"/></g><g transform="rotate(-12 10.4 13)"><path d="M5.70,11.29 A5.0,5.0 0 0 1 14.73,10.50" fill="none" stroke="#35a82c" stroke-width="3.8"/><polygon points="18.19,8.50 11.27,12.50 16.44,13.46" fill="#35a82c"/><path d="M15.10,14.71 A5.0,5.0 0 0 1 6.07,15.50" fill="none" stroke="#e2da18" stroke-width="3.8"/><polygon points="2.61,17.50 9.53,13.51 4.36,12.54" fill="#e2da18"/></g></g><g transform="translate(680,68)"><g transform="translate(0.6,1.4) scale(1.0)"><polygon points="0,2.6 5,0 10,2.6 5,5.2" fill="#c4c4c4" stroke="#222" stroke-width="0.7"/><polygon points="0,2.6 5,5.2 5,11 0,8.2" fill="#8a8a88" stroke="#222" stroke-width="0.7"/><polygon points="10,2.6 5,5.2 5,11 10,8.2" fill="#5c5c5a" stroke="#222" stroke-width="0.7"/></g><g transform="translate(9.1,1.4) scale(1.0)"><polygon points="0,2.6 5,0 10,2.6 5,5.2" fill="#f4f4f6" stroke="#222" stroke-width="0.8"/><polygon points="0,2.6 5,5.2 5,11 0,8.2" fill="#e2e2e8" stroke="#222" stroke-width="0.8"/><polygon points="10,2.6 5,5.2 5,11 10,8.2" fill="#cfcfd8" stroke="#222" stroke-width="0.8"/></g><path d="M0.7999999999999998,11.6 H6.8 M3.8,8.6 V14.6" stroke="#3c7d16" stroke-width="3.1" opacity="0.35" transform="translate(0.6,0.7)"/><path d="M0.7999999999999998,11.6 H6.8 M3.8,8.6 V14.6" stroke="#7be040" stroke-width="2.2"/><path d="M6.6,19 L13.4,10.6" stroke="#222" stroke-width="1.2"/><path d="M12.0,17.9 H19.8" stroke="#9a9210" stroke-width="2.2" opacity="0.5"/><path d="M12.0,17 H19.2" stroke="#f2ee10" stroke-width="2.2"/></g><g transform="translate(707,68)"><ellipse cx="13.7" cy="17.6" rx="6.7" ry="1.7600000000000002" fill="#000" opacity="0.28"/><path d="M5,4.800000000000001 V16.400000000000002 A5.2,2.2 0 0 0 15.4,16.400000000000002 V4.800000000000001 A5.2,2.2 0 0 0 5,4.800000000000001 Z" fill="url(#gBlueCyl)" stroke="#10183a" stroke-width="1.1"/><ellipse cx="10.2" cy="4.800000000000001" rx="5.2" ry="2.2" fill="#4a6cc0" stroke="#10183a" stroke-width="1.1"/><path d="M10.2,7 V17.4" stroke="#0a0a14" stroke-width="1.3" stroke-dasharray="2.2,1.7"/></g><g transform="translate(733,68)"><ellipse cx="13.7" cy="17.6" rx="6.7" ry="1.7600000000000002" fill="#000" opacity="0.28"/><path d="M5,4.800000000000001 V16.400000000000002 A5.2,2.2 0 0 0 15.4,16.400000000000002 V4.800000000000001 A5.2,2.2 0 0 0 5,4.800000000000001 Z" fill="#e8ecf6" stroke="#10183a" stroke-width="1.1"/><ellipse cx="10.2" cy="4.800000000000001" rx="5.2" ry="2.2" fill="#4a6cc0" stroke="#10183a" stroke-width="1.1"/><path d="M8.8,7 V18.4 M12,7 V18.4" stroke="#e9e23c" stroke-width="1.4"/><path d="M10.4,7 V18.6 M13.6,6.6 V18" stroke="#3c5ab0" stroke-width="1.2"/></g><g transform="translate(759,68)"><ellipse cx="12.2" cy="18.0" rx="6.8" ry="1.7600000000000002" fill="#000" opacity="0.28"/><path d="M3.4,4.800000000000001 V16.8 A5.3,2.2 0 0 0 14.0,16.8 V4.800000000000001 A5.3,2.2 0 0 0 3.4,4.800000000000001 Z" fill="url(#gLightCyl)" stroke="#38e4f2" stroke-width="1.2"/><ellipse cx="8.7" cy="4.800000000000001" rx="5.3" ry="2.2" fill="#dbe4f6" stroke="#38e4f2" stroke-width="1.2"/><path d="M3.4,16.8 A5.3,2.2 0 0 1 14.0,16.8" fill="none" stroke="#38e4f2" stroke-width="0.96"/><path d="M6.4,10.4 L10,15.6 L16.4,5.6" stroke="#4c9a24" stroke-width="3.4" fill="none" opacity="0.5" transform="translate(0.5,0.7)"/><path d="M6.4,10.4 L10,15.6 L16.4,5.6" stroke="#6fd23a" stroke-width="2.8" fill="none"/></g><g transform="translate(785,68)"><ellipse cx="4.6" cy="14.6" rx="5" ry="1.7" fill="#000" opacity="0.45"/><ellipse cx="13.0" cy="18.0" rx="6.8" ry="1.7600000000000002" fill="#000" opacity="0.28"/><path d="M4.2,4.800000000000001 V16.8 A5.3,2.2 0 0 0 14.8,16.8 V4.800000000000001 A5.3,2.2 0 0 0 4.2,4.800000000000001 Z" fill="url(#gLightCyl)" stroke="#38e4f2" stroke-width="1.2"/><ellipse cx="9.5" cy="4.800000000000001" rx="5.3" ry="2.2" fill="#dbe4f6" stroke="#38e4f2" stroke-width="1.2"/><path d="M4.2,16.8 A5.3,2.2 0 0 1 14.8,16.8" fill="none" stroke="#38e4f2" stroke-width="0.96"/><rect x="11.6" y="0.8" width="5.8" height="5.8" fill="none" stroke="#c89612" stroke-width="1.3"/><circle cx="13.8" cy="4" r="1.6" fill="none" stroke="#e0401c" stroke-width="1.1"/></g><g transform="translate(811.5,68)"><path d="M4.4,4.800000000000001 V16.6 A5.2,2.2 0 0 0 14.8,16.6 V4.800000000000001 A5.2,2.2 0 0 0 4.4,4.800000000000001 Z" fill="#dfe8f8" stroke="#5a9be0" stroke-width="1.0"/><ellipse cx="9.600000000000001" cy="4.800000000000001" rx="5.2" ry="2.2" fill="#eef3fc" stroke="#5a9be0" stroke-width="1.0"/><path d="M4.4,16.6 A5.2,2.2 0 0 1 14.8,16.6" fill="none" stroke="#5a9be0" stroke-width="0.8"/><path d="M6.6,5 L8.6,20 M9.2,5.4 L7.2,19 M11,5.4 L13.2,19.6 M13.2,5 L11,19.4" stroke="#5a9be0" stroke-width="0.8" fill="none"/></g><g transform="translate(837,68)"><polygon points="1,5.6 10.2,2.4 19,5.6 10.4,9" fill="#5a96e8" stroke="#0c1630" stroke-width="1.2" stroke-linejoin="round"/><polygon points="1,5.6 10.4,9 10,19.4 3.4,13.6" fill="#2c5cc0" stroke="#0c1630" stroke-width="1.2" stroke-linejoin="round"/><polygon points="19,5.6 10.4,9 10,19.4 16.8,13.6" fill="#1c368c" stroke="#0c1630" stroke-width="1.2" stroke-linejoin="round"/></g><g transform="translate(878,68)"><g transform="translate(9.4,8.6) scale(1.0)"><polygon points="0,2.6 5,0 10,2.6 5,5.2" fill="#c4c4c4" stroke="#222" stroke-width="0.7"/><polygon points="0,2.6 5,5.2 5,11 0,8.2" fill="#8a8a88" stroke="#222" stroke-width="0.7"/><polygon points="10,2.6 5,5.2 5,11 10,8.2" fill="#5c5c5a" stroke="#222" stroke-width="0.7"/></g><path d="M8.84,9.36 L3,15.4" stroke="#8a8a8a" stroke-width="3" stroke-linecap="round"/><path d="M8.84,9.36 L3,15.4" stroke="#e4e4e4" stroke-width="1.4" stroke-linecap="round"/><circle cx="11.6" cy="6.6" r="4.6" fill="url(#gLens)" stroke="#6d9be0" stroke-width="1.3"/><circle cx="11.6" cy="6.6" r="5.5" fill="none" stroke="#c8cbd6" stroke-width="0.7"/><polygon points="10.4,4.4 14,6.8 10.4,9.2" fill="#b6c4d8" stroke="#8ea0ba" stroke-width="0.5"/><path d="M0.8,2.2 H3.8 M2.3,0.7 V3.7 M0.8,5.2 H3.8" stroke="#111" stroke-width="0.9"/></g><g transform="translate(904,68)"><g transform="translate(9.4,8.6) scale(1.0)"><polygon points="0,2.6 5,0 10,2.6 5,5.2" fill="#c4c4c4" stroke="#222" stroke-width="0.7"/><polygon points="0,2.6 5,5.2 5,11 0,8.2" fill="#8a8a88" stroke="#222" stroke-width="0.7"/><polygon points="10,2.6 5,5.2 5,11 10,8.2" fill="#5c5c5a" stroke="#222" stroke-width="0.7"/></g><path d="M8.44,9.36 L3,15.4" stroke="#8a8a8a" stroke-width="3" stroke-linecap="round"/><path d="M8.44,9.36 L3,15.4" stroke="#e4e4e4" stroke-width="1.4" stroke-linecap="round"/><circle cx="11.2" cy="6.6" r="4.6" fill="url(#gLens)" stroke="#6d9be0" stroke-width="1.3"/><circle cx="11.2" cy="6.6" r="5.5" fill="none" stroke="#c8cbd6" stroke-width="0.7"/><polygon points="10,4.4 13.6,6.8 10,9.2" fill="#b6c4d8" stroke="#8ea0ba" stroke-width="0.5"/><path d="M0.40000000000000013,0.5999999999999999 L4.0,4.2 M4.0,0.5999999999999999 L0.40000000000000013,4.2" stroke="#3aa025" stroke-width="1.7"/><rect x="1.0000000000000002" y="1.2" width="2.4" height="2.4" fill="#59c83a"/><path d="M16.2,0.5999999999999999 L19.8,4.2 M19.8,0.5999999999999999 L16.2,4.2" stroke="#3aa025" stroke-width="1.7"/><rect x="16.8" y="1.2" width="2.4" height="2.4" fill="#59c83a"/><path d="M0.40000000000000013,15.799999999999997 L4.0,19.4 M4.0,15.799999999999997 L0.40000000000000013,19.4" stroke="#3aa025" stroke-width="1.7"/><rect x="1.0000000000000002" y="16.4" width="2.4" height="2.4" fill="#59c83a"/><path d="M16.2,15.799999999999997 L19.8,19.4 M19.8,15.799999999999997 L16.2,19.4" stroke="#3aa025" stroke-width="1.7"/><rect x="16.8" y="16.4" width="2.4" height="2.4" fill="#59c83a"/></g><g transform="translate(930.5,68)"><rect x="3.2" y="4" width="13.6" height="11.6" fill="#eef1fa" stroke="#333" stroke-width="1"/><rect x="4.2" y="5" width="11.6" height="9.6" fill="#cfd8f0"/><path d="M6.8,6.6 V13 M13.6,6.6 V13" stroke="#2a1a70" stroke-width="1.4"/><rect x="9.6" y="7.6" width="1.4" height="1.4" fill="#2a1a70"/><rect x="9.6" y="11" width="1.4" height="1.4" fill="#2a1a70"/><path d="M0.5999999999999999,1.2 L4.2,4.8 M4.2,1.2 L0.5999999999999999,4.8" stroke="#3aa025" stroke-width="1.7"/><rect x="1.2" y="1.8" width="2.4" height="2.4" fill="#59c83a"/><path d="M15.799999999999997,1.2 L19.4,4.8 M19.4,1.2 L15.799999999999997,4.8" stroke="#3aa025" stroke-width="1.7"/><rect x="16.4" y="1.8" width="2.4" height="2.4" fill="#59c83a"/><path d="M0.5999999999999999,14.8 L4.2,18.400000000000002 M4.2,14.8 L0.5999999999999999,18.400000000000002" stroke="#3aa025" stroke-width="1.7"/><rect x="1.2" y="15.400000000000002" width="2.4" height="2.4" fill="#59c83a"/><path d="M15.799999999999997,14.8 L19.4,18.400000000000002 M19.4,14.8 L15.799999999999997,18.400000000000002" stroke="#3aa025" stroke-width="1.7"/><rect x="16.4" y="15.400000000000002" width="2.4" height="2.4" fill="#59c83a"/></g><g transform="translate(957,68)"><path d="M3.6,15.6 L15.4,3.8" stroke="#2f8a1e" stroke-width="2.6"/><path d="M3.6,15.6 L15.4,3.8" stroke="#66d040" stroke-width="1.4"/><polygon points="17.4,1.4 16.6,8 11,2.6" fill="#56c436" stroke="#2f8a1e" stroke-width="0.8"/><circle cx="3.8" cy="15.4" r="2.6" fill="#d9d9d9" stroke="#555" stroke-width="0.7"/><circle cx="3.2" cy="14.6" r="0.9" fill="#fff"/></g><g transform="translate(983,68)"><g transform="rotate(75 10 10.4)"><path d="M3.99,8.21 A6.4,6.4 0 0 1 15.54,7.20" fill="none" stroke="#2f9a24" stroke-width="3.6"/><polygon points="18.82,5.31 12.27,9.09 17.16,10.01" fill="#2f9a24"/><path d="M16.01,12.59 A6.4,6.4 0 0 1 4.46,13.60" fill="none" stroke="#4cbc34" stroke-width="3.6"/><polygon points="1.18,15.49 7.73,11.71 2.84,10.79" fill="#4cbc34"/></g></g><g transform="translate(1009,68)"><g transform="translate(1,1) scale(0.9,0.9411764705882353)"><path d="M0.3,7.6 C4,1.2 14,-0.4 19.6,4.2 C15.5,8.8 5,9.4 0.3,7.6 Z" fill="#d6d8ee" stroke="#9a7488" stroke-width="0.5"/><ellipse cx="9.9" cy="4.7" rx="4.7" ry="4" fill="url(#gEyeIris)"/><ellipse cx="9.9" cy="4.4" rx="1.9" ry="1.8" fill="#0c1424"/><path d="M0.3,7.6 C3.6,0.2 14.4,-2 19.8,4.2 C15,2.4 6.4,3 0.3,7.6 Z" fill="#1a2238"/><path d="M0.3,7.6 C4,1.8 8,0.6 11,0.6" stroke="#1a2238" stroke-width="1.2" fill="none"/><path d="M2.5,3.6 L1.6,1.8 M5,1.8 L4.4,0 M8,0.8 L7.8,-1 M11.5,0.6 L11.9,-1.1 M14.6,1.2 L15.6,-0.4 M17.4,2.5 L18.9,1.2" stroke="#1a2238" stroke-width="0.9"/><circle cx="8.4" cy="3.8" r="0.8" fill="#a8c0ee"/></g><circle cx="9.8" cy="13.4" r="5.9" fill="url(#gSmile)" stroke="#c89a18" stroke-width="0.6"/><circle cx="7.8" cy="11.8" r="0.8" fill="#3a2a08"/><circle cx="11.8" cy="11.8" r="0.8" fill="#3a2a08"/><path d="M6.6,14.8 C8.4,17 11.2,17 13,14.8" stroke="#3a2a08" stroke-width="0.8" fill="none"/></g><g transform="translate(1052,68)"><g transform="translate(6.4,10.6) scale(1.0)"><polygon points="-6,0.6 4.4,-5.6 12.6,-1 12.4,5.6 3.4,10.4 -5.6,5.4" fill="#eaf0fa" stroke="#b8c2d6" stroke-width="0.6"/><path d="M0,2.4 V-6.4" stroke="#1c5ce0" stroke-width="1.6"/><polygon points="-2,-5.6 0,-9.6 2,-5.6" fill="#1c8cf0"/><path d="M0,2.4 L6.4,-2.6" stroke="#3aa82c" stroke-width="1.7"/><polygon points="8.4,-4.4 7.4,-0.6 4.4,-4" fill="#3aa82c"/><path d="M0,2.4 L5.4,6.6" stroke="#d42020" stroke-width="1.7"/><polygon points="7.4,8.4 3.6,7.8 6.2,4.6" fill="#d42020"/><circle cx="0" cy="2.4" r="1.7" fill="#e8e8e8" stroke="#444" stroke-width="0.6"/></g></g><g transform="translate(1078,68)"><g transform="translate(11.2,7.4) scale(0.55)"><polygon points="-6,0.6 4.4,-5.6 12.6,-1 12.4,5.6 3.4,10.4 -5.6,5.4" fill="#eaf0fa" stroke="#b8c2d6" stroke-width="0.6"/><path d="M0,2.4 V-6.4" stroke="#1c5ce0" stroke-width="1.6"/><polygon points="-2,-5.6 0,-9.6 2,-5.6" fill="#1c8cf0"/><path d="M0,2.4 L6.4,-2.6" stroke="#3aa82c" stroke-width="1.7"/><polygon points="8.4,-4.4 7.4,-0.6 4.4,-4" fill="#3aa82c"/><path d="M0,2.4 L5.4,6.6" stroke="#d42020" stroke-width="1.7"/><polygon points="7.4,8.4 3.6,7.8 6.2,4.6" fill="#d42020"/><circle cx="0" cy="2.4" r="1.7" fill="#e8e8e8" stroke="#444" stroke-width="0.6"/></g><rect x="6.6" y="13" width="8.8" height="4.6" fill="none" stroke="#9a9aa2" stroke-width="1.4"/><path d="M2.4,16 L8.4,8.8" stroke="#2f9a24" stroke-width="3.2"/><polygon points="11,5.6 10.8,12.4 4.6,7.6" fill="#2f9a24"/><circle cx="2.6" cy="16" r="2" fill="#bdbdbd" stroke="#666" stroke-width="0.6"/></g><g transform="translate(1104,68)"><g transform="translate(12.4,7.4) scale(0.6)"><polygon points="-6,0.6 4.4,-5.6 12.6,-1 12.4,5.6 3.4,10.4 -5.6,5.4" fill="#eaf0fa" stroke="#b8c2d6" stroke-width="0.6"/><path d="M0,2.4 V-6.4" stroke="#1c5ce0" stroke-width="1.6"/><polygon points="-2,-5.6 0,-9.6 2,-5.6" fill="#1c8cf0"/><path d="M0,2.4 L6.4,-2.6" stroke="#3aa82c" stroke-width="1.7"/><polygon points="8.4,-4.4 7.4,-0.6 4.4,-4" fill="#3aa82c"/><path d="M0,2.4 L5.4,6.6" stroke="#d42020" stroke-width="1.7"/><polygon points="7.4,8.4 3.6,7.8 6.2,4.6" fill="#d42020"/><circle cx="0" cy="2.4" r="1.7" fill="#e8e8e8" stroke="#444" stroke-width="0.6"/></g><path d="M2.2,7 L7.6,12 M1.6,12 L7,17" stroke="#2f9a24" stroke-width="2.4"/><polygon points="0,4.6 5.6,5 1.6,9.6" fill="#2f9a24"/><polygon points="9.4,18.6 4,18.2 7.8,13.6" fill="#2f9a24"/><path d="M4.2,9.2 L5.4,14.4" stroke="#2f9a24" stroke-width="2.2"/></g><g transform="translate(1146.5,68)"><rect x="0.8" y="1.0" width="6" height="5.8" fill="#18d8f0"/><rect x="7.2" y="1.0" width="6" height="5.8" fill="#f6dc10"/><rect x="13.600000000000001" y="1.0" width="6" height="5.8" fill="#14e414"/><rect x="0.8" y="7.2" width="6" height="5.8" fill="#f68a10"/><rect x="7.2" y="7.2" width="6" height="5.8" fill="#a46408"/><rect x="13.600000000000001" y="7.2" width="6" height="5.8" fill="#f014e8"/><rect x="0.8" y="13.4" width="6" height="5.8" fill="#1414f0"/><rect x="7.2" y="13.4" width="6" height="5.8" fill="#10a42c"/><rect x="13.600000000000001" y="13.4" width="6" height="5.8" fill="#808080"/></g><g transform="translate(1173,68)"><rect x="1.6" y="0.6" width="15.8" height="18.6" fill="#e9f0fc" stroke="#8d93a6" stroke-width="1"/><rect x="3.4" y="2.2" width="12.2" height="1.6" fill="#4a96ea"/><rect x="3.4" y="5.2" width="4" height="1.2" fill="#f6a820"/><rect x="11.6" y="5.2" width="4" height="1.2" fill="#f6a820"/><rect x="3.4" y="7.8" width="12.2" height="1.4" fill="#9ae07a"/><rect x="5.2" y="10.4" width="2.6" height="2.4" fill="#18d8f0"/><rect x="8.3" y="10.4" width="2.6" height="2.4" fill="#f6dc10"/><rect x="11.4" y="10.4" width="2.6" height="2.4" fill="#14e414"/><rect x="5.2" y="13.2" width="2.6" height="2.4" fill="#f68a10"/><rect x="8.3" y="13.2" width="2.6" height="2.4" fill="#a46408"/><rect x="11.4" y="13.2" width="2.6" height="2.4" fill="#f014e8"/><rect x="5.2" y="16.0" width="2.6" height="2.4" fill="#1414f0"/><rect x="8.3" y="16.0" width="2.6" height="2.4" fill="#10a42c"/><rect x="11.4" y="16.0" width="2.6" height="2.4" fill="#808080"/></g><g transform="translate(1199,68)"><circle cx="10" cy="10" r="9.4" fill="#5f9a3c" stroke="#8a9484" stroke-width="1.2"/><ellipse cx="10" cy="15" rx="2.4" ry="2.8" fill="#c9c9b8"/><g transform="translate(10,9.6) scale(1.3)"><path d="M-5.5,5.5 L3,-3" stroke="#3f7fd0" stroke-width="2.6" stroke-linecap="round"/><path d="M3,-3 L5.6,-5.8" stroke="#c8ccd4" stroke-width="1.6" stroke-linecap="round"/><path d="M5.5,5.5 L-2.5,-2.5" stroke="#e9e9ec" stroke-width="2.6" stroke-linecap="round"/><path d="M-5.6,-3.2 A3,3 0 1 0 -2.6,-5.8 L-3.4,-3.6 Z" fill="#e9e9ec" stroke="#9a9aa2" stroke-width="0.5"/></g></g><g transform="translate(1225,68)"><rect x="0.8" y="0.8" width="18.8" height="18.4" fill="#dbe7fb" stroke="#555e74" stroke-width="1"/><rect x="1.4" y="1.4" width="17.6" height="3.6" fill="#3a82d0"/><rect x="5.0" y="6.4" width="2.4" height="2" fill="#9aba28"/><rect x="8.3" y="6.4" width="2.4" height="2" fill="#9aba28"/><rect x="11.6" y="6.4" width="2.4" height="2" fill="#9aba28"/><rect x="14.899999999999999" y="6.4" width="2.4" height="2" fill="#9aba28"/><rect x="2.6" y="6.6" width="1.8" height="2" fill="#b85a10"/><rect x="2.6" y="9.5" width="1.8" height="2" fill="#b85a10"/><rect x="2.6" y="12.399999999999999" width="1.8" height="2" fill="#b85a10"/><rect x="2.6" y="15.299999999999999" width="1.8" height="2" fill="#b85a10"/><g transform="translate(12.2,13.2) scale(0.95)"><path d="M-5.5,5.5 L3,-3" stroke="#3f7fd0" stroke-width="2.6" stroke-linecap="round"/><path d="M3,-3 L5.6,-5.8" stroke="#c8ccd4" stroke-width="1.6" stroke-linecap="round"/><path d="M5.5,5.5 L-2.5,-2.5" stroke="#c9d0dc" stroke-width="2.6" stroke-linecap="round"/><path d="M-5.6,-3.2 A3,3 0 1 0 -2.6,-5.8 L-3.4,-3.6 Z" fill="#c9d0dc" stroke="#9a9aa2" stroke-width="0.5"/></g></g><g transform="translate(1251,68)"><rect x="1.0" y="1.4" width="1.9" height="1.9" fill="#1c3c7c" transform="rotate(45 1.95 2.35)"/><rect x="1.0" y="5.5" width="1.9" height="1.9" fill="#1c3c7c" transform="rotate(45 1.95 6.449999999999999)"/><rect x="1.0" y="9.6" width="1.9" height="1.9" fill="#1c3c7c" transform="rotate(45 1.95 10.549999999999999)"/><rect x="1.0" y="13.7" width="1.9" height="1.9" fill="#1c3c7c" transform="rotate(45 1.95 14.649999999999999)"/><rect x="1.0" y="17.799999999999997" width="1.9" height="1.9" fill="#1c3c7c" transform="rotate(45 1.95 18.75)"/><rect x="5.2" y="1.4" width="1.9" height="1.9" fill="#1c3c7c" transform="rotate(45 6.15 2.35)"/><rect x="5.2" y="17.799999999999997" width="1.9" height="1.9" fill="#1c3c7c" transform="rotate(45 6.15 18.75)"/><rect x="9.4" y="1.4" width="1.9" height="1.9" fill="#1c3c7c" transform="rotate(45 10.35 2.35)"/><rect x="9.4" y="17.799999999999997" width="1.9" height="1.9" fill="#1c3c7c" transform="rotate(45 10.35 18.75)"/><rect x="13.600000000000001" y="1.4" width="1.9" height="1.9" fill="#1c3c7c" transform="rotate(45 14.55 2.35)"/><rect x="13.600000000000001" y="17.799999999999997" width="1.9" height="1.9" fill="#1c3c7c" transform="rotate(45 14.55 18.75)"/><rect x="17.8" y="1.4" width="1.9" height="1.9" fill="#1c3c7c" transform="rotate(45 18.75 2.35)"/><rect x="17.8" y="5.5" width="1.9" height="1.9" fill="#1c3c7c" transform="rotate(45 18.75 6.449999999999999)"/><rect x="17.8" y="9.6" width="1.9" height="1.9" fill="#1c3c7c" transform="rotate(45 18.75 10.549999999999999)"/><rect x="17.8" y="13.7" width="1.9" height="1.9" fill="#1c3c7c" transform="rotate(45 18.75 14.649999999999999)"/><rect x="17.8" y="17.799999999999997" width="1.9" height="1.9" fill="#1c3c7c" transform="rotate(45 18.75 18.75)"/><path d="M5.4,10 L12.4,3.2 C14.4,1.8 17.4,2.4 19,3.8 L19.2,8.4 L13.2,11.8 L11.2,9.6 L8.2,11.4 Z" fill="#e8bc78" stroke="#9a6c2c" stroke-width="0.7"/><circle cx="6" cy="14.6" r="3.4" fill="#f4ec2c" opacity="0.9"/><path d="M3.6,14.6 H8.4 M6,12.2 V17" stroke="#2c6ce0" stroke-width="1.3"/></g><g transform="translate(1277,68)"><polygon points="5.4,4.4 19,2 14.4,15.6 1,18" fill="#c8ccd8" stroke="#2c6cdc" stroke-width="1.5"/><polygon points="6.6,5.6 17.2,3.8 13.4,14.4 3,16.4" fill="#e46a6a"/><path d="M9.2,5.2 L5.6,16 M12,4.6 L8.4,15.4 M14.8,4.2 L11.2,14.8 M6,8.4 L16.2,6.6 M5,11.2 L15.2,9.4 M4,14 L14.2,12.2" stroke="#e8e8f0" stroke-width="0.8"/><polygon points="9,12 14,11 13.4,14.4 8,15.4" fill="#2a2a30" opacity="0.7"/></g></svg>
<div class="abs" id="viewport"></div>
<svg class="abs" style="left:0;top:0" width="1920" height="1048" viewBox="0 0 1920 1048">
<polygon points="777.0,433.0 833.0,484.5 829.5,709.0 774.0,660.0" fill="#adacbd" stroke="#000" stroke-width="1" />
<polygon points="777.0,442.5 830.5,492.0 828.5,569.0 777.5,529.0" fill="#adacbd" stroke="#000" stroke-width="0.9" />
<polygon points="777.5,529.0 828.5,569.0 829.0,700.0 775.0,655.0" fill="#9c9cae" stroke="#000" stroke-width="0.8" />
<line x1="779.0" y1="531.0" x2="779.0" y2="560.0" stroke="#000" stroke-width="1.2"/>
<line x1="782.0" y1="534.0" x2="782.0" y2="560.0" stroke="#000" stroke-width="0.9"/>
<g transform="translate(783,910.4) scale(0.84)"><path d="M-8,-12.5 L13,-13.5 L18.5,-10 L18.5,4 L11,10 L-2,10 Z" fill="#031003"/><ellipse cx="-6.5" cy="3" rx="11.5" ry="12" fill="#031003"/><polygon points="-11,-9 -5,-13.5 -1,-10 -6,-5.5" fill="#12a012"/><polygon points="-5,-5 3,-9.5 3,-1 -7,4" fill="#0a640a"/><path d="M5,-11.5 H13 M6,-9.2 H12" stroke="#0c860c" stroke-width="1.1"/><rect x="14.6" y="-10" width="2" height="8.6" fill="#0c860c"/><rect x="9.4" y="-6.6" width="2" height="2" fill="#12a012"/><rect x="5.6" y="-6" width="2.4" height="1" fill="#0c860c"/><path d="M4.6,-2.6 H9 M10,-2 L13.4,-3" stroke="#0c7a0c" stroke-width="1.4"/><polygon points="2.4,2 14.6,0 13.4,3.6 8,3.6 6.6,5.6" fill="#0c860c"/><path d="M-14.4,-1 C-13.6,-4.4 -12,-6 -11,-6.6 M-13.6,-2 C-15.4,4 -12.4,11.4 -7,12.6 C-4,13 -2,12 -1,11" stroke="#0c860c" stroke-width="1.1" fill="none"/><path d="M-8.6,2.6 H-1.4" stroke="#0c860c" stroke-width="1.2"/><path d="M-9,5 C-9,9.6 -2,9.6 -1.4,5 Z" fill="#0c7a0c"/><path d="M-5.2,5 V8.4" stroke="#031003" stroke-width="1"/><path d="M4.4,7.4 L6,6 L7.2,7.6 M9.6,5.6 V7.6 M11.6,6.6 H12.6" stroke="#0c7a0c" stroke-width="0.9" fill="none"/></g>
<polygon points="774.0,653.0 830.0,698.0 830.0,714.0 772.0,667.0" fill="#a3a2b2" stroke="#000" stroke-width="1" />
<line x1="774" y1="660" x2="830" y2="705" stroke="#0a0a0e" stroke-width="1.2" stroke-dasharray="3,1.2"/>
<polygon points="772.4,664.0 828.0,711.0 822.0,934.0 765.2,890.0" fill="#a4a4b8" stroke="#000" stroke-width="1.4" />
<polygon points="775.0,682.7 823.2,722.8 818.6,918.8 769.7,878.0" fill="#d6d6d8" stroke="#111" stroke-width="1.1" />
<line x1="774.0" y1="672.0" x2="826.5" y2="716.0" stroke="#000" stroke-width="1.0"/>
<line x1="770.0" y1="884.0" x2="820.0" y2="926.0" stroke="#333" stroke-width="0.8"/>
<polygon points="776.7,433.3 1030.0,421.7 1086.7,470.0 833.3,483.5" fill="#a4a3b3" stroke="#000" stroke-width="1.2" />
<polygon points="813.3,439.2 1008.3,430.3 1047.5,464.2 853.3,474.2" fill="#8f8e9c" stroke="#000" stroke-width="1.2" />
<polygon points="1027.5,447.0 1047.5,464.2 1027.5,465.5" fill="#b4b4c8" stroke="#000" stroke-width="0.8" />
<polygon points="813.3,439.2 1008.3,430.3 1013.0,437.5 822.0,446.5" fill="#0c0c10" stroke="#000" stroke-width="1" />
<line x1="815.9" y1="441.4" x2="1009.7" y2="432.5" stroke="#bcbcd2" stroke-width="1.2"/>
<line x1="819.2" y1="444.2" x2="1011.5" y2="435.2" stroke="#bcbcd2" stroke-width="1.2"/>
<polygon points="895.0,440.0 908.3,439.5 908.3,471.7 895.0,472.3" fill="#0c0c10" stroke="#000" stroke-width="0.8" />
<line x1="899.0" y1="441.0" x2="899.0" y2="471.5" stroke="#bcbcd2" stroke-width="1.3"/>
<line x1="904.5" y1="441.0" x2="904.5" y2="471.5" stroke="#bcbcd2" stroke-width="1.3"/>
<polygon points="1014.0,436.5 1027.5,436.0 1027.5,465.5 1014.0,466.0" fill="#0c0c10" stroke="#000" stroke-width="0.8" />
<line x1="1018.0" y1="437.0" x2="1018.0" y2="465.5" stroke="#bcbcd2" stroke-width="1.3"/>
<line x1="1023.5" y1="437.0" x2="1023.5" y2="465.5" stroke="#bcbcd2" stroke-width="1.3"/>
<polygon points="898.3,436.7 936.7,470.4 953.3,469.5 920.0,435.8" fill="#0c0c10" stroke="#000" stroke-width="1" />
<line x1="902.6" y1="436.5" x2="940.0" y2="470.2" stroke="#bcbcd2" stroke-width="1.3"/>
<line x1="908.1" y1="436.3" x2="944.2" y2="470.0" stroke="#bcbcd2" stroke-width="1.3"/>
<line x1="913.9" y1="436.1" x2="948.7" y2="469.8" stroke="#bcbcd2" stroke-width="1.3"/>
<polygon points="776.7,434.5 832.0,484.0 830.5,492.0 776.7,442.5" fill="#0c0c10" stroke="#000" stroke-width="1" />
<line x1="776.7" y1="436.9" x2="831.5" y2="486.4" stroke="#bcbcd2" stroke-width="1.2"/>
<line x1="776.7" y1="439.9" x2="831.0" y2="489.4" stroke="#bcbcd2" stroke-width="1.2"/>
<polygon points="1031.0,422.5 1192.0,415.0 1252.0,462.0 1252.0,466.5 1084.0,472.0" fill="#8f8e9c" stroke="#000" stroke-width="1" />
<polygon points="1033.0,424.0 1190.5,414.9 1192.0,429.4 1050.6,436.4" fill="#0c0c10" stroke="#000" stroke-width="1" />
<line x1="1036.9" y1="426.7" x2="1190.8" y2="418.1" stroke="#bcbcd2" stroke-width="1.5"/>
<line x1="1041.8" y1="430.2" x2="1191.2" y2="422.1" stroke="#bcbcd2" stroke-width="1.5"/>
<line x1="1046.7" y1="433.7" x2="1191.7" y2="426.2" stroke="#bcbcd2" stroke-width="1.5"/>
<polygon points="1031.0,422.5 1083.5,470.0 1091.5,469.8 1039.5,423.5" fill="#0c0c10" stroke="#000" stroke-width="1" />
<line x1="1033.5" y1="422.8" x2="1085.9" y2="469.9" stroke="#bcbcd2" stroke-width="1.2"/>
<line x1="1036.8" y1="423.2" x2="1088.9" y2="469.9" stroke="#bcbcd2" stroke-width="1.2"/>
<polygon points="1190.0,414.9 1245.6,462.0 1251.0,460.6 1197.0,415.5" fill="#0c0c10" stroke="#000" stroke-width="1" />
<line x1="1192.1" y1="415.1" x2="1247.2" y2="461.6" stroke="#bcbcd2" stroke-width="1.2"/>
<line x1="1194.8" y1="415.3" x2="1249.3" y2="461.0" stroke="#bcbcd2" stroke-width="1.2"/>
<polygon points="1215.8,451.5 1226.7,451.5 1226.7,463.6 1215.8,463.6" fill="#0c0c10" stroke="#000" stroke-width="0.6" />
<line x1="1219.0" y1="452.0" x2="1219.0" y2="463.0" stroke="#bcbcd2" stroke-width="1.1"/>
<line x1="1223.0" y1="452.0" x2="1223.0" y2="463.0" stroke="#bcbcd2" stroke-width="1.1"/>
<polygon points="1201.5,333.5 1416.5,322.5 1464.5,364.0 1248.0,375.0" fill="#a4a3b2" stroke="#000" stroke-width="1" />
<polygon points="1248.0,375.0 1464.5,364.0 1463.5,449.5 1246.0,460.5" fill="#8f8e9c" stroke="#000" stroke-width="1" />
<polygon points="1201.5,333.5 1248.0,375.0 1246.0,460.5 1199.0,415.0" fill="#adacbd" stroke="#000" stroke-width="1" />
<polygon points="1246.0,460.5 1463.5,449.5 1472.5,452.5 1472.5,456.0 1250.0,465.0" fill="#0c0c10" stroke="#000" stroke-width="0.8" />
<line x1="1250.0" y1="462.6" x2="1470.0" y2="452.6" stroke="#bcbcd2" stroke-width="1.2"/>
<polygon points="1196.5,415.2 1199.2,414.8 1246.2,460.6 1248.0,463.0" fill="#b8b8ca" stroke="none" stroke-width="0" />
<polygon points="1189.4,415.6 1242.0,466.5 1248.0,463.0 1196.5,415.2" fill="#0c0c10" stroke="#000" stroke-width="1" />
<line x1="1191.5" y1="415.5" x2="1243.8" y2="465.4" stroke="#bcbcd2" stroke-width="1.3"/>
<line x1="1194.2" y1="415.3" x2="1246.1" y2="464.1" stroke="#bcbcd2" stroke-width="1.3"/>
<polygon points="706.0,558.5 800.0,555.5 828.0,575.0 828.0,586.0 706.0,590.0" fill="#908f9e" stroke="#000" stroke-width="1" />
<polygon points="707.0,559.5 801.0,556.5 805.0,559.0 707.0,562.5" fill="#c8c8da" stroke="none" stroke-width="0" />
<polygon points="707.0,562.5 805.0,559.0 811.0,563.5 707.0,567.5" fill="#8c8c9f" stroke="none" stroke-width="0" />
<polygon points="707.0,568.5 812.0,564.5 816.0,567.5 707.0,572.0" fill="#c4c4d8" stroke="none" stroke-width="0" />
<polygon points="707.0,572.0 816.0,567.5 822.0,572.0 707.0,577.0" fill="#8a8a9d" stroke="none" stroke-width="0" />
<polygon points="707.0,578.0 823.0,573.0 827.0,576.5 707.0,581.5" fill="#c2c2d6" stroke="none" stroke-width="0" />
<polygon points="707.0,581.5 827.0,576.5 828.0,582.0 707.0,586.5" fill="#8a8a9d" stroke="none" stroke-width="0" />
<line x1="707.0" y1="567.8" x2="812.0" y2="563.8" stroke="#222" stroke-width="0.7"/>
<line x1="707.0" y1="577.4" x2="822.0" y2="572.4" stroke="#222" stroke-width="0.7"/>
<polygon points="696.5,558.0 706.5,557.5 706.5,593.0 696.5,593.5" fill="#9c9cb0" stroke="#000" stroke-width="1.2" />
<polygon points="699.0,561.0 704.0,561.0 704.0,589.0 699.0,589.0" fill="#7c7c90" stroke="#222" stroke-width="0.6" />
<polygon points="695.5,592.0 707.0,586.5 828.0,582.5 828.0,601.0 700.0,604.0" fill="#52ad52" stroke="#0c3d0c" stroke-width="0.9" />
<line x1="706.0" y1="590.0" x2="828.0" y2="585.5" stroke="#111" stroke-width="1.4"/>
<line x1="777.8" y1="529.0" x2="827.8" y2="572.0" stroke="#0a0a0e" stroke-width="1.4"/>
<line x1="777.8" y1="532.4" x2="827.8" y2="575.4" stroke="#0a0a0e" stroke-width="1.1"/>
<line x1="777.8" y1="535.6" x2="827.8" y2="578.6" stroke="#0a0a0e" stroke-width="1.3"/>
<path d="M705,579 L686,579.4 C664,580 664,610 686,610.2 L822,606.6" fill="none" stroke="#000" stroke-width="12.5" stroke-linecap="butt"/>
<path d="M705,579 L686,579.4 C664,580 664,610 686,610.2 L822,606.6" fill="none" stroke="#77788a" stroke-width="10.1"/>
<path d="M705,579 L686,579.4 C664,580 664,610 686,610.2 L822,606.6" fill="none" stroke="#0a0a0e" stroke-width="10.1" stroke-dasharray="1.4,3.2"/>
<path d="M705,579 L686,579.4 C664,580 664,610 686,610.2 L822,606.6" fill="none" stroke="#c9c9d6" stroke-width="2.2" stroke-dasharray="1.6,3"/>
<path d="M705,579 L686,579.4 C664,580 664,610 686,610.2 L822,606.6" fill="none" stroke="#15151a" stroke-width="0.9" stroke-dasharray="0.9,3.7" stroke-dashoffset="-0.4"/>
<polygon points="776.0,612.0 829.0,612.0 829.0,668.0 776.0,668.0" fill="#8c8c9e" stroke="#000" stroke-width="0.8" />
<polygon points="783.5,633.0 789.5,633.0 789.5,652.5 783.5,652.5" fill="#d4d4de" stroke="#333" stroke-width="0.7" />
<line x1="785.5" y1="633.0" x2="785.5" y2="652.5" stroke="#fff" stroke-width="1.0"/>
<polygon points="783.0,614.5 790.0,614.5 790.0,620.0 783.0,620.0" fill="#c9c9d3" stroke="#333" stroke-width="0.6" />
<polygon points="808.5,613.0 820.5,613.0 820.5,627.0 808.5,627.0" fill="#e2e2ea" stroke="#444" stroke-width="0.7" />
<line x1="811.5" y1="613.0" x2="811.5" y2="627.0" stroke="#fff" stroke-width="1.6"/>
<line x1="818.0" y1="613.0" x2="818.0" y2="627.0" stroke="#a8a8b4" stroke-width="1.6"/>
<polygon points="813.0,629.0 826.0,629.5 826.0,641.5 817.0,641.5" fill="#4a4a50" stroke="#000" stroke-width="0.8" />
<polygon points="808.0,632.0 812.0,632.0 812.0,639.5 808.0,639.5" fill="#e8df30" stroke="#333" stroke-width="0.5" />
<polygon points="822.5,627.5 826.5,627.5 826.5,632.5 822.5,632.5" fill="#e8df30" stroke="#333" stroke-width="0.5" />
<polygon points="801.0,638.9 814.3,638.2 825.0,646.9 825.0,658.9 819.0,658.9 819.0,654.9" fill="#d878cc" stroke="#6a2062" stroke-width="0.8" />
<polygon points="801.0,638.9 819.0,654.9 819.0,658.9 801.0,642.5" fill="#b858ae" stroke="#6a2062" stroke-width="0.6" />
<path d="M804,626.4 L781.5,626.2 C757.5,626 757.5,661 781.5,661.2 L816,661.6" fill="none" stroke="#000" stroke-width="12" stroke-linecap="butt"/>
<path d="M804,626.4 L781.5,626.2 C757.5,626 757.5,661 781.5,661.2 L816,661.6" fill="none" stroke="#77788a" stroke-width="9.6"/>
<path d="M804,626.4 L781.5,626.2 C757.5,626 757.5,661 781.5,661.2 L816,661.6" fill="none" stroke="#0a0a0e" stroke-width="9.6" stroke-dasharray="1.4,3.2"/>
<path d="M804,626.4 L781.5,626.2 C757.5,626 757.5,661 781.5,661.2 L816,661.6" fill="none" stroke="#c9c9d6" stroke-width="2.2" stroke-dasharray="1.6,3"/>
<path d="M804,626.4 L781.5,626.2 C757.5,626 757.5,661 781.5,661.2 L816,661.6" fill="none" stroke="#15151a" stroke-width="0.9" stroke-dasharray="0.9,3.7" stroke-dashoffset="-0.4"/>
<polygon points="1471.5,528.0 1524.5,524.6 1524.5,553.5 1471.5,558.0" fill="#908f9e" stroke="#000" stroke-width="1" />
<polygon points="1472.0,529.5 1524.0,526.2 1524.0,531.0 1472.0,534.5" fill="#b6b6cc" stroke="none" stroke-width="0" />
<polygon points="1472.0,534.5 1524.0,531.0 1524.0,536.0 1472.0,540.0" fill="#8c8c9f" stroke="none" stroke-width="0" />
<polygon points="1472.0,541.0 1524.0,537.0 1524.0,542.0 1472.0,546.5" fill="#b6b6cc" stroke="none" stroke-width="0" />
<polygon points="1472.0,546.5 1524.0,542.0 1524.0,547.0 1472.0,552.0" fill="#8c8c9f" stroke="none" stroke-width="0" />
<polygon points="1472.0,553.0 1502.0,550.5 1502.0,555.0 1472.0,557.5" fill="#b0b0c6" stroke="none" stroke-width="0" />
<polygon points="1524.5,524.6 1531.8,524.6 1531.8,550.5 1524.5,551.0" fill="#8e8ea2" stroke="#000" stroke-width="1" />
<circle cx="1528.5" cy="538.5" r="1.4" fill="#222"/>
<polygon points="1533.0,532.5 1538.5,532.5 1538.5,536.0 1533.0,536.0" fill="#b4b4c2" stroke="#111" stroke-width="0.6" />
<polygon points="1471.7,558.4 1503.8,556.7 1510.7,563.0 1471.7,565.5" fill="#52ad52" stroke="#0c3d0c" stroke-width="0.8" />
<path d="M1529,546.8 L1543,545.4 C1562,544 1562,567 1543,567.6 L1472,570" fill="none" stroke="#000" stroke-width="8.6"/>
<path d="M1529,546.8 L1543,545.4 C1562,544 1562,567 1543,567.6 L1472,570" fill="none" stroke="#a4a4b6" stroke-width="6.6"/>
<path d="M1529,546.8 L1543,545.4 C1562,544 1562,567 1543,567.6 L1472,570" fill="none" stroke="#0a0a0e" stroke-width="6.6" stroke-dasharray="0.9,8.2"/>
<path d="M1529,546.8 L1543,545.4 C1562,544 1562,567 1543,567.6 L1472,570" fill="none" stroke="#15151a" stroke-width="1.8" stroke-dasharray="1.8,7.3" stroke-dashoffset="-4"/>
<polygon points="1501.5,553.2 1519.8,550.9 1535.9,561.2 1530.1,564.1 1518.7,567.5" fill="#a8a8bc" stroke="#000" stroke-width="1" />
<polygon points="1518.0,562.5 1531.0,561.0 1532.0,565.0 1519.0,567.0" fill="#c4c4d4" stroke="#222" stroke-width="0.6" />
<circle cx="1520" cy="556.6" r="0.9" fill="#111"/>
<polygon points="1503.8,571.0 1516.4,571.0 1516.4,589.3 1503.8,589.3" fill="#8a8a9a" stroke="#000" stroke-width="1" />
<polygon points="1503.8,571.0 1508.8,571.0 1508.8,586.0 1503.8,586.0" fill="#0a0a0e" stroke="none" stroke-width="0" />
<line x1="1512.0" y1="572.0" x2="1512.0" y2="588.0" stroke="#222" stroke-width="0.8"/>
<polygon points="1471.7,585.3 1505.0,586.0 1505.0,589.0 1471.7,588.5" fill="#908f9e" stroke="#000" stroke-width="0.9" />
<polygon points="1480.0,587.5 1491.0,587.5 1491.0,592.0 1480.0,592.0" fill="#a0a0b0" stroke="#000" stroke-width="0.8" />
<polygon points="1499.0,588.0 1518.0,588.5 1517.0,592.5 1503.0,592.5" fill="#a0a0b0" stroke="#000" stroke-width="0.8" />
<polygon points="1479.8,592.7 1484.3,592.7 1484.3,598.4 1479.8,598.4" fill="#e06a6a" stroke="#3a0a0a" stroke-width="0.6" />
<polygon points="1486.6,591.6 1490.6,591.6 1490.6,596.2 1486.6,596.2" fill="#e06a6a" stroke="#3a0a0a" stroke-width="0.6" />
<polygon points="830.0,484.5 1084.0,471.0 1470.0,455.5 1464.0,912.0 1080.0,925.5 825.0,936.0" fill="#8f8e9c" stroke="#000" stroke-width="1" />
<polygon points="843.0,727.2 945.5,723.0 940.3,918.0 837.3,921.8" fill="#acae82" stroke="#000" stroke-width="2.2" />
<polygon points="960.4,722.4 1063.4,717.8 1057.7,912.4 956.0,917.0" fill="#acae82" stroke="#000" stroke-width="2.2" />
<polygon points="1093.0,715.8 1263.8,708.7 1259.5,903.3 1087.8,910.4" fill="#acae82" stroke="#000" stroke-width="2.2" />
<polygon points="1281.0,707.2 1452.0,700.1 1447.8,895.3 1276.0,901.8" fill="#acae82" stroke="#000" stroke-width="2.2" />
<polygon points="964.5,489.5 1072.0,484.5 1070.5,546.0 963.0,551.5" fill="#a87a38" stroke="#000" stroke-width="1" />
<polygon points="1284.3,476.3 1461.3,468.3 1459.7,531.8 1283.0,539.0" fill="#a87a38" stroke="#000" stroke-width="1" />
<polygon points="981.0,501.6 1037.7,499.0 1037.2,539.6 980.4,542.6" fill="#245c26" stroke="#000" stroke-width="2.2" />
<polygon points="988.5,509.0 1030.6,507.0 1030.2,532.4 988.0,534.6" fill="#5c5c5e" stroke="#000" stroke-width="1.4" />
<polygon points="1362.5,483.8 1418.3,481.6 1417.8,521.7 1361.7,525.2" fill="#245c26" stroke="#000" stroke-width="2.2" />
<polygon points="1369.0,491.8 1412.0,489.6 1411.7,514.5 1368.4,517.7" fill="#595959" stroke="#000" stroke-width="1.4" />
<circle cx="1050.5" cy="497.5" r="3.7" fill="#050505"/>
<circle cx="1050.5" cy="512" r="3.7" fill="#050505"/>
<rect x="1049.6" y="511.7" width="3" height="2" fill="#10c844"/>
<circle cx="1050.5" cy="526" r="3.7" fill="#050505"/>
<circle cx="1051.7" cy="527" r="1.9" fill="#8e0c0c"/>
<circle cx="1050.5" cy="540" r="3.7" fill="#050505"/>
<circle cx="1050.8" cy="540.5" r="2.7" fill="#a00a0a"/>
<circle cx="1431.7" cy="480.6" r="3.7" fill="#050505"/>
<circle cx="1431.7" cy="494.4" r="3.7" fill="#050505"/>
<rect x="1430.8" y="494.09999999999997" width="3" height="2" fill="#10c844"/>
<circle cx="1431.7" cy="508.9" r="3.7" fill="#050505"/>
<circle cx="1432.9" cy="509.9" r="1.9" fill="#8e0c0c"/>
<circle cx="1431.7" cy="522.8" r="3.7" fill="#050505"/>
<circle cx="1432.0" cy="523.3" r="2.7" fill="#a00a0a"/>
<polygon points="841.0,557.1 1072.0,548.4 1072.0,560.0 841.0,569.1" fill="#0c0c10" stroke="#000" stroke-width="1" />
<line x1="841.0" y1="560.1" x2="1072.0" y2="551.3" stroke="#bcbcd2" stroke-width="2.0"/>
<line x1="841.0" y1="563.3" x2="1072.0" y2="554.4" stroke="#bcbcd2" stroke-width="2.0"/>
<line x1="841.0" y1="566.6" x2="1072.0" y2="557.6" stroke="#bcbcd2" stroke-width="2.0"/>
<polygon points="1095.0,547.6 1461.0,534.1 1461.0,545.6 1095.0,559.1" fill="#0c0c10" stroke="#000" stroke-width="1" />
<line x1="1095.0" y1="550.5" x2="1461.0" y2="537.0" stroke="#bcbcd2" stroke-width="2.0"/>
<line x1="1095.0" y1="553.6" x2="1461.0" y2="540.1" stroke="#bcbcd2" stroke-width="2.0"/>
<line x1="1095.0" y1="556.7" x2="1461.0" y2="543.2" stroke="#bcbcd2" stroke-width="2.0"/>
<polygon points="840.0,693.7 1070.0,685.7 1070.0,700.5 840.0,708.6" fill="#0c0c10" stroke="#000" stroke-width="1" />
<line x1="840.0" y1="697.4" x2="1070.0" y2="689.4" stroke="#bcbcd2" stroke-width="2.0"/>
<line x1="840.0" y1="701.4" x2="1070.0" y2="693.4" stroke="#bcbcd2" stroke-width="2.0"/>
<line x1="840.0" y1="705.5" x2="1070.0" y2="697.4" stroke="#bcbcd2" stroke-width="2.0"/>
<polygon points="1094.0,684.8 1458.0,670.9 1458.0,684.9 1094.0,699.6" fill="#0c0c10" stroke="#000" stroke-width="1" />
<line x1="1094.0" y1="688.5" x2="1458.0" y2="674.4" stroke="#bcbcd2" stroke-width="2.0"/>
<line x1="1094.0" y1="692.5" x2="1458.0" y2="678.2" stroke="#bcbcd2" stroke-width="2.0"/>
<line x1="1094.0" y1="696.5" x2="1458.0" y2="681.9" stroke="#bcbcd2" stroke-width="2.0"/>
<polygon points="827.0,709.1 1068.0,700.6 1068.0,716.0 827.0,724.1" fill="#908f9e" stroke="#000" stroke-width="1.6" />
<polygon points="1093.0,699.6 1456.0,685.0 1456.0,700.6 1093.0,715.1" fill="#908f9e" stroke="#000" stroke-width="1.6" />
<line x1="836.0" y1="712.3" x2="1068.0" y2="703.1" stroke="#000" stroke-width="2.0"/>
<line x1="1093.0" y1="702.2" x2="1457.0" y2="688.0" stroke="#000" stroke-width="2.0"/>
<polygon points="826.0,922.2 1066.0,911.8 1066.0,926.2 826.0,936.2" fill="#908f9e" stroke="#000" stroke-width="1.6" />
<polygon points="1090.0,910.8 1454.0,896.6 1454.0,912.6 1090.0,925.3" fill="#908f9e" stroke="#000" stroke-width="1.6" />
<polygon points="829.0,484.5 843.5,484.5 840.3,709.0 823.9,709.0" fill="#0c0c10" stroke="#000" stroke-width="1" />
<line x1="836.0" y1="484.5" x2="831.8" y2="709.0" stroke="#bcbcd2" stroke-width="2.5"/>
<line x1="840.0" y1="484.5" x2="836.3" y2="709.0" stroke="#bcbcd2" stroke-width="2.5"/>
<polygon points="823.9,709.0 828.1,709.0 824.8,937.0 818.8,937.0" fill="#a9a8ba" stroke="#000" stroke-width="1.2" />
<line x1="825.9" y1="709.0" x2="821.8" y2="937.0" stroke="#222" stroke-width="0.8"/>
<polygon points="828.1,709.0 840.3,709.0 837.0,937.0 824.8,937.0" fill="#908f9e" stroke="#000" stroke-width="1.6" />
<polygon points="1071.5,471.0 1096.0,471.0 1094.0,699.0 1068.2,699.0" fill="#0c0c10" stroke="#000" stroke-width="1" />
<line x1="1074.2" y1="471.0" x2="1071.1" y2="699.0" stroke="#bcbcd2" stroke-width="2.3"/>
<line x1="1080.3" y1="471.0" x2="1077.5" y2="699.0" stroke="#bcbcd2" stroke-width="2.3"/>
<line x1="1085.7" y1="471.0" x2="1083.2" y2="699.0" stroke="#bcbcd2" stroke-width="2.3"/>
<line x1="1092.6" y1="471.0" x2="1090.4" y2="699.0" stroke="#bcbcd2" stroke-width="2.3"/>
<polygon points="1068.2,699.0 1094.0,699.0 1092.0,926.0 1065.0,926.0" fill="#908f9e" stroke="#000" stroke-width="1.6" />
<line x1="1080.1" y1="699.0" x2="1077.5" y2="926.0" stroke="#000" stroke-width="1.2"/>
<line x1="1082.6" y1="699.0" x2="1080.0" y2="926.0" stroke="#ddd" stroke-width="0.8"/>
<polygon points="1460.0,455.5 1472.5,455.5 1469.5,684.0 1456.7,684.0" fill="#0c0c10" stroke="#000" stroke-width="1" />
<line x1="1466.0" y1="455.5" x2="1462.9" y2="684.0" stroke="#bcbcd2" stroke-width="2.5"/>
<line x1="1469.5" y1="455.5" x2="1466.4" y2="684.0" stroke="#bcbcd2" stroke-width="2.5"/>
<polygon points="1456.7,684.0 1469.5,684.0 1466.5,912.0 1453.5,912.0" fill="#908f9e" stroke="#000" stroke-width="1.6" />
<line x1="1460.7" y1="684.0" x2="1457.5" y2="912.0" stroke="#555" stroke-width="0.8"/>
<polygon points="829.0,484.6 1084.0,471.0 1084.0,485.6 829.0,497.6" fill="#0c0c10" stroke="#000" stroke-width="1" />
<line x1="829.0" y1="487.8" x2="1084.0" y2="474.6" stroke="#bcbcd2" stroke-width="2.0"/>
<line x1="829.0" y1="491.4" x2="1084.0" y2="478.6" stroke="#bcbcd2" stroke-width="2.0"/>
<line x1="829.0" y1="494.9" x2="1084.0" y2="482.5" stroke="#bcbcd2" stroke-width="2.0"/>
<polygon points="1084.0,471.0 1472.0,455.4 1472.0,468.6 1084.0,485.6" fill="#0c0c10" stroke="#000" stroke-width="1" />
<line x1="1084.0" y1="474.6" x2="1472.0" y2="458.7" stroke="#bcbcd2" stroke-width="2.0"/>
<line x1="1084.0" y1="478.6" x2="1472.0" y2="462.3" stroke="#bcbcd2" stroke-width="2.0"/>
<line x1="1084.0" y1="482.5" x2="1472.0" y2="465.8" stroke="#bcbcd2" stroke-width="2.0"/>
<line x1="1084.0" y1="471.0" x2="1084.0" y2="485.6" stroke="#000" stroke-width="1"/>
<polygon points="952.5,491.8 963.5,491.3 963.0,552.5 952.0,552.9" fill="#0c0c10" stroke="#000" stroke-width="1" />
<line x1="955.8" y1="491.7" x2="955.3" y2="552.8" stroke="#bcbcd2" stroke-width="1.5"/>
<line x1="960.0" y1="491.5" x2="959.5" y2="552.7" stroke="#bcbcd2" stroke-width="1.5"/>
<polygon points="1273.0,477.3 1283.5,476.9 1283.0,540.7 1272.5,541.1" fill="#0c0c10" stroke="#000" stroke-width="1" />
<line x1="1276.2" y1="477.2" x2="1275.7" y2="540.9" stroke="#bcbcd2" stroke-width="1.5"/>
<line x1="1280.1" y1="477.0" x2="1279.6" y2="540.8" stroke="#bcbcd2" stroke-width="1.5"/>
<polygon points="1333.5,550.3 1345.0,549.9 1343.5,675.3 1332.0,675.7" fill="#0c0c10" stroke="#000" stroke-width="1" />
<line x1="1337.0" y1="550.2" x2="1335.5" y2="675.6" stroke="#bcbcd2" stroke-width="1.5"/>
<line x1="1341.3" y1="550.0" x2="1339.8" y2="675.4" stroke="#bcbcd2" stroke-width="1.5"/>
<line x1="957.0" y1="564.5" x2="955.0" y2="689.7" stroke="#000" stroke-width="1.2"/>
<line x1="1213.5" y1="554.7" x2="1211.0" y2="680.3" stroke="#000" stroke-width="1.2"/>
<polygon points="946.0,720.1 960.0,719.6 955.5,916.6 941.0,917.2" fill="#908f9e" stroke="#000" stroke-width="1" />
<polygon points="1264.5,708.3 1280.5,707.6 1275.5,903.6 1260.0,904.2" fill="#908f9e" stroke="#000" stroke-width="1" />
<polygon points="837.0,500.0 852.0,499.4 852.0,513.4 837.0,514.0" fill="#17171c" stroke="#000" stroke-width="1" />
<polygon points="842.6,498.5 847.0,498.3 847.0,515.0 842.6,515.2" fill="#c4c4d0" stroke="#000" stroke-width="0.7" />
<line x1="844.2" y1="500.0" x2="844.2" y2="514.0" stroke="#f0f0f6" stroke-width="1"/>
<rect x="838.5" y="502.1" width="1.8" height="1.8" fill="#b8b8c8"/>
<rect x="848.7" y="502.1" width="1.8" height="1.8" fill="#b8b8c8"/>
<rect x="838.5" y="510.1" width="1.8" height="1.8" fill="#b8b8c8"/>
<rect x="848.7" y="510.1" width="1.8" height="1.8" fill="#b8b8c8"/>
<line x1="837.0" y1="507.0" x2="852.0" y2="506.6" stroke="#908f9e" stroke-width="0.8"/>
<polygon points="836.5,588.0 851.5,587.4 851.5,601.4 836.5,602.0" fill="#17171c" stroke="#000" stroke-width="1" />
<polygon points="842.1,586.5 846.5,586.3 846.5,603.0 842.1,603.2" fill="#c4c4d0" stroke="#000" stroke-width="0.7" />
<line x1="843.7" y1="588.0" x2="843.7" y2="602.0" stroke="#f0f0f6" stroke-width="1"/>
<rect x="838.0" y="590.1" width="1.8" height="1.8" fill="#b8b8c8"/>
<rect x="848.2" y="590.1" width="1.8" height="1.8" fill="#b8b8c8"/>
<rect x="838.0" y="598.1" width="1.8" height="1.8" fill="#b8b8c8"/>
<rect x="848.2" y="598.1" width="1.8" height="1.8" fill="#b8b8c8"/>
<line x1="836.5" y1="595.0" x2="851.5" y2="594.6" stroke="#908f9e" stroke-width="0.8"/>
<polygon points="1087.0,488.5 1102.0,487.9 1102.0,501.9 1087.0,502.5" fill="#17171c" stroke="#000" stroke-width="1" />
<polygon points="1092.6,487.0 1097.0,486.8 1097.0,503.5 1092.6,503.7" fill="#c4c4d0" stroke="#000" stroke-width="0.7" />
<line x1="1094.2" y1="488.5" x2="1094.2" y2="502.5" stroke="#f0f0f6" stroke-width="1"/>
<rect x="1088.5" y="490.6" width="1.8" height="1.8" fill="#b8b8c8"/>
<rect x="1098.6999999999998" y="490.6" width="1.8" height="1.8" fill="#b8b8c8"/>
<rect x="1088.5" y="498.6" width="1.8" height="1.8" fill="#b8b8c8"/>
<rect x="1098.6999999999998" y="498.6" width="1.8" height="1.8" fill="#b8b8c8"/>
<line x1="1087.0" y1="495.5" x2="1102.0" y2="495.1" stroke="#908f9e" stroke-width="0.8"/>
<polygon points="1084.5,567.5 1099.5,566.9 1099.5,580.9 1084.5,581.5" fill="#17171c" stroke="#000" stroke-width="1" />
<polygon points="1090.1,566.0 1094.5,565.8 1094.5,582.5 1090.1,582.7" fill="#c4c4d0" stroke="#000" stroke-width="0.7" />
<line x1="1091.7" y1="567.5" x2="1091.7" y2="581.5" stroke="#f0f0f6" stroke-width="1"/>
<rect x="1086.0" y="569.6" width="1.8" height="1.8" fill="#b8b8c8"/>
<rect x="1096.1999999999998" y="569.6" width="1.8" height="1.8" fill="#b8b8c8"/>
<rect x="1086.0" y="577.6" width="1.8" height="1.8" fill="#b8b8c8"/>
<rect x="1096.1999999999998" y="577.6" width="1.8" height="1.8" fill="#b8b8c8"/>
<line x1="1084.5" y1="574.5" x2="1099.5" y2="574.1" stroke="#908f9e" stroke-width="0.8"/>
<polygon points="924.6,814.1 926.5,813.9 927.5,811.9 928.5,813.9 930.4,814.1 930.4,828.9 928.5,829.1 927.5,831.1 926.5,829.1 924.6,828.9" fill="#908f9e" stroke="#111" stroke-width="0.9" />
<polygon points="969.6,812.1 971.5,811.9 972.5,809.9 973.5,811.9 975.4,812.1 975.4,826.9 973.5,827.1 972.5,829.1 971.5,827.1 969.6,826.9" fill="#908f9e" stroke="#111" stroke-width="0.9" />
<polygon points="1244.6,798.6 1246.5,798.4 1247.5,796.4 1248.5,798.4 1250.4,798.6 1250.4,813.4 1248.5,813.6 1247.5,815.6 1246.5,813.6 1244.6,813.4" fill="#8e8ea2" stroke="#111" stroke-width="0.9" />
<polygon points="1289.8,797.1 1291.7,796.9 1292.7,794.9 1293.7,796.9 1295.6,797.1 1295.6,811.9 1293.7,812.1 1292.7,814.1 1291.7,812.1 1289.8,811.9" fill="#e6df3a" stroke="#111" stroke-width="0.9" />
<circle cx="851" cy="615" r="0.9" fill="#111"/>
<circle cx="851" cy="639" r="0.9" fill="#111"/>
<circle cx="838" cy="540" r="0.9" fill="#111"/>
<circle cx="838" cy="552" r="0.9" fill="#111"/>
<circle cx="1208" cy="604" r="0.9" fill="#111"/>
<circle cx="1218" cy="604" r="0.9" fill="#111"/>
<circle cx="1208" cy="628" r="0.9" fill="#111"/>
<circle cx="1218" cy="628" r="0.9" fill="#111"/>
<circle cx="1334" cy="568" r="0.9" fill="#111"/>
<circle cx="1346" cy="575" r="0.9" fill="#111"/>
<circle cx="1330" cy="646" r="0.9" fill="#111"/>
<circle cx="1346" cy="646" r="0.9" fill="#111"/>
<circle cx="1455" cy="594" r="0.9" fill="#111"/>
<circle cx="1455" cy="618" r="0.9" fill="#111"/>
<circle cx="1266" cy="497" r="0.9" fill="#111"/>
<circle cx="1266" cy="521" r="0.9" fill="#111"/>
<circle cx="1069" cy="665" r="0.9" fill="#111"/>
<circle cx="1092" cy="665" r="0.9" fill="#111"/>
<g transform="translate(837,953) scale(1.0)"><path d="M-8,-12.5 L13,-13.5 L18.5,-10 L18.5,4 L11,10 L-2,10 Z" fill="#031003"/><ellipse cx="-6.5" cy="3" rx="11.5" ry="12" fill="#031003"/><polygon points="-11,-9 -5,-13.5 -1,-10 -6,-5.5" fill="#12a012"/><polygon points="-5,-5 3,-9.5 3,-1 -7,4" fill="#0a640a"/><path d="M5,-11.5 H13 M6,-9.2 H12" stroke="#0c860c" stroke-width="1.1"/><rect x="14.6" y="-10" width="2" height="8.6" fill="#0c860c"/><rect x="9.4" y="-6.6" width="2" height="2" fill="#12a012"/><rect x="5.6" y="-6" width="2.4" height="1" fill="#0c860c"/><path d="M4.6,-2.6 H9 M10,-2 L13.4,-3" stroke="#0c7a0c" stroke-width="1.4"/><polygon points="2.4,2 14.6,0 13.4,3.6 8,3.6 6.6,5.6" fill="#0c860c"/><path d="M-14.4,-1 C-13.6,-4.4 -12,-6 -11,-6.6 M-13.6,-2 C-15.4,4 -12.4,11.4 -7,12.6 C-4,13 -2,12 -1,11" stroke="#0c860c" stroke-width="1.1" fill="none"/><path d="M-8.6,2.6 H-1.4" stroke="#0c860c" stroke-width="1.2"/><path d="M-9,5 C-9,9.6 -2,9.6 -1.4,5 Z" fill="#0c7a0c"/><path d="M-5.2,5 V8.4" stroke="#031003" stroke-width="1"/><path d="M4.4,7.4 L6,6 L7.2,7.6 M9.6,5.6 V7.6 M11.6,6.6 H12.6" stroke="#0c7a0c" stroke-width="0.9" fill="none"/></g>
<g transform="translate(1040,942.3) scale(0.96)"><path d="M-8,-12.5 L13,-13.5 L18.5,-10 L18.5,4 L11,10 L-2,10 Z" fill="#031003"/><ellipse cx="-6.5" cy="3" rx="11.5" ry="12" fill="#031003"/><polygon points="-11,-9 -5,-13.5 -1,-10 -6,-5.5" fill="#12a012"/><polygon points="-5,-5 3,-9.5 3,-1 -7,4" fill="#0a640a"/><path d="M5,-11.5 H13 M6,-9.2 H12" stroke="#0c860c" stroke-width="1.1"/><rect x="14.6" y="-10" width="2" height="8.6" fill="#0c860c"/><rect x="9.4" y="-6.6" width="2" height="2" fill="#12a012"/><rect x="5.6" y="-6" width="2.4" height="1" fill="#0c860c"/><path d="M4.6,-2.6 H9 M10,-2 L13.4,-3" stroke="#0c7a0c" stroke-width="1.4"/><polygon points="2.4,2 14.6,0 13.4,3.6 8,3.6 6.6,5.6" fill="#0c860c"/><path d="M-14.4,-1 C-13.6,-4.4 -12,-6 -11,-6.6 M-13.6,-2 C-15.4,4 -12.4,11.4 -7,12.6 C-4,13 -2,12 -1,11" stroke="#0c860c" stroke-width="1.1" fill="none"/><path d="M-8.6,2.6 H-1.4" stroke="#0c860c" stroke-width="1.2"/><path d="M-9,5 C-9,9.6 -2,9.6 -1.4,5 Z" fill="#0c7a0c"/><path d="M-5.2,5 V8.4" stroke="#031003" stroke-width="1"/><path d="M4.4,7.4 L6,6 L7.2,7.6 M9.6,5.6 V7.6 M11.6,6.6 H12.6" stroke="#0c7a0c" stroke-width="0.9" fill="none"/></g>
<g transform="translate(1095.6,941) scale(0.96)"><path d="M-8,-12.5 L13,-13.5 L18.5,-10 L18.5,4 L11,10 L-2,10 Z" fill="#031003"/><ellipse cx="-6.5" cy="3" rx="11.5" ry="12" fill="#031003"/><polygon points="-11,-9 -5,-13.5 -1,-10 -6,-5.5" fill="#12a012"/><polygon points="-5,-5 3,-9.5 3,-1 -7,4" fill="#0a640a"/><path d="M5,-11.5 H13 M6,-9.2 H12" stroke="#0c860c" stroke-width="1.1"/><rect x="14.6" y="-10" width="2" height="8.6" fill="#0c860c"/><rect x="9.4" y="-6.6" width="2" height="2" fill="#12a012"/><rect x="5.6" y="-6" width="2.4" height="1" fill="#0c860c"/><path d="M4.6,-2.6 H9 M10,-2 L13.4,-3" stroke="#0c7a0c" stroke-width="1.4"/><polygon points="2.4,2 14.6,0 13.4,3.6 8,3.6 6.6,5.6" fill="#0c860c"/><path d="M-14.4,-1 C-13.6,-4.4 -12,-6 -11,-6.6 M-13.6,-2 C-15.4,4 -12.4,11.4 -7,12.6 C-4,13 -2,12 -1,11" stroke="#0c860c" stroke-width="1.1" fill="none"/><path d="M-8.6,2.6 H-1.4" stroke="#0c860c" stroke-width="1.2"/><path d="M-9,5 C-9,9.6 -2,9.6 -1.4,5 Z" fill="#0c7a0c"/><path d="M-5.2,5 V8.4" stroke="#031003" stroke-width="1"/><path d="M4.4,7.4 L6,6 L7.2,7.6 M9.6,5.6 V7.6 M11.6,6.6 H12.6" stroke="#0c7a0c" stroke-width="0.9" fill="none"/></g>
<g transform="translate(1420.6,925.2) scale(0.98)"><path d="M-8,-12.5 L13,-13.5 L18.5,-10 L18.5,4 L11,10 L-2,10 Z" fill="#031003"/><ellipse cx="-6.5" cy="3" rx="11.5" ry="12" fill="#031003"/><polygon points="-11,-9 -5,-13.5 -1,-10 -6,-5.5" fill="#12a012"/><polygon points="-5,-5 3,-9.5 3,-1 -7,4" fill="#0a640a"/><path d="M5,-11.5 H13 M6,-9.2 H12" stroke="#0c860c" stroke-width="1.1"/><rect x="14.6" y="-10" width="2" height="8.6" fill="#0c860c"/><rect x="9.4" y="-6.6" width="2" height="2" fill="#12a012"/><rect x="5.6" y="-6" width="2.4" height="1" fill="#0c860c"/><path d="M4.6,-2.6 H9 M10,-2 L13.4,-3" stroke="#0c7a0c" stroke-width="1.4"/><polygon points="2.4,2 14.6,0 13.4,3.6 8,3.6 6.6,5.6" fill="#0c860c"/><path d="M-14.4,-1 C-13.6,-4.4 -12,-6 -11,-6.6 M-13.6,-2 C-15.4,4 -12.4,11.4 -7,12.6 C-4,13 -2,12 -1,11" stroke="#0c860c" stroke-width="1.1" fill="none"/><path d="M-8.6,2.6 H-1.4" stroke="#0c860c" stroke-width="1.2"/><path d="M-9,5 C-9,9.6 -2,9.6 -1.4,5 Z" fill="#0c7a0c"/><path d="M-5.2,5 V8.4" stroke="#031003" stroke-width="1"/><path d="M4.4,7.4 L6,6 L7.2,7.6 M9.6,5.6 V7.6 M11.6,6.6 H12.6" stroke="#0c7a0c" stroke-width="0.9" fill="none"/></g>
<polygon points="821.5,936.5 857.5,935.0 857.5,939.6 821.5,940.4" fill="#a8a8ba" stroke="#000" stroke-width="1" />
<polygon points="1026.0,926.5 1056.0,925.5 1056.0,929.0 1026.0,930.0" fill="#a8a8ba" stroke="#000" stroke-width="0.9" />
<polygon points="1080.0,925.5 1112.0,924.5 1112.0,928.0 1080.0,929.0" fill="#a8a8ba" stroke="#000" stroke-width="0.9" />
<polygon points="1408.0,911.0 1440.0,910.0 1440.0,913.4 1408.0,914.4" fill="#a8a8ba" stroke="#000" stroke-width="0.9" />
<polygon points="780.0,803.0 784.0,803.0 784.0,830.0 780.0,830.0" fill="#4a1a1a" stroke="#000" stroke-width="0.6" />
<polygon points="783.5,790.0 794.5,789.5 795.0,807.0 784.0,808.0" fill="#5c1414" stroke="#000" stroke-width="0.9" />
<polygon points="785.5,787.5 793.0,787.0 793.5,792.0 785.5,792.5" fill="#6a1a1a" stroke="#000" stroke-width="0.6" />
<line x1="787.5" y1="793.0" x2="787.5" y2="806.0" stroke="#2a0808" stroke-width="1"/>
<line x1="791.0" y1="793.0" x2="791.0" y2="806.0" stroke="#2a0808" stroke-width="1"/>
<polygon points="781.5,806.0 801.0,803.5 802.0,826.0 782.5,829.0" fill="#8e8e98" stroke="#000" stroke-width="0.9" />
<polygon points="798.0,802.0 802.5,801.0 803.0,812.0 799.0,812.5" fill="#9a9aa4" stroke="#000" stroke-width="0.7" />
<line x1="786.0" y1="808.0" x2="786.0" y2="828.0" stroke="#222" stroke-width="0.9"/>
<line x1="790.5" y1="808.0" x2="790.5" y2="827.0" stroke="#222" stroke-width="0.8"/>
<circle cx="796" cy="817" r="4.2" fill="#b8b8c0" stroke="#000" stroke-width="0.9"/>
<polygon points="784.5,827.0 799.0,825.0 799.0,850.0 795.0,853.5 788.0,854.5 784.5,851.0" fill="#a2a2a8" stroke="#111" stroke-width="0.9" />
<line x1="788.0" y1="829.0" x2="788.0" y2="852.0" stroke="#e0e0e4" stroke-width="1.2"/>
<line x1="792.0" y1="829.0" x2="792.0" y2="852.0" stroke="#333" stroke-width="0.8"/>
<circle cx="801.8" cy="818" r="3.4" fill="#111" stroke="#000"/>
<circle cx="802.6" cy="817.4" r="1.2" fill="#3aa0ff"/><circle cx="803.4" cy="819.6" r="0.9" fill="#e8d020"/>
<circle cx="778.3" cy="861" r="1.5" fill="#333"/>
<polygon points="784.0,864.5 786.0,864.5 786.0,871.0 784.0,871.0" fill="#222" stroke="none" stroke-width="0" />
<g><polygon points="96,918.5 120.8,917.5 127.5,923.5 127.5,947 120,941 95.5,943 95.5,922.5" fill="#8c9ab8" fill-opacity="0.45" stroke="#cfcfd6" stroke-width="0.9"/><polygon points="97.4,944.2 102.8,949.6 125.5,948.4 119.6,942.4" fill="#8a9448" stroke="#f0ec20" stroke-width="0.8"/><path d="M121.2,940 L121.6,878" stroke="#18d8e8" stroke-width="3"/><polygon points="117.8,879 121.5,868.6 125.4,879" fill="#18e8f4"/><path d="M119,942.2 L96,942.6" stroke="#e01010" stroke-width="2.6"/><polygon points="86,943.2 96,939.4 96,946.6" fill="#f01414"/><path d="M120,941.6 L130,951.4" stroke="#14c814" stroke-width="2.6"/><circle cx="131" cy="952.6" r="3.6" fill="#14d814"/><circle cx="119.7" cy="940.9" r="3" fill="#8a8a8a" stroke="#5a5a5a" stroke-width="0.5"/><path d="M118,858.5 H124.6 L118,867 H124.6" stroke="#d8d8d8" stroke-width="1" fill="none"/><path d="M75.4,939.4 L82.8,947.8 M82.8,939.4 L75.4,947.8" stroke="#d8d8d8" stroke-width="1"/><path d="M132,950.6 L135.4,955 L138.6,950.6 M135.4,955 V959.6" stroke="#d8d8d8" stroke-width="1" fill="none"/><path d="M873,995.5 H877.6 L873,1000.5" stroke="#b8bccc" stroke-width="0.9" fill="none"/></g>
<g opacity="0.93"><defs><linearGradient id="gWm" x1="0" x2="0" y1="0" y2="1"><stop offset="0" stop-color="#f06a1c"/><stop offset="1" stop-color="#f9b424"/></linearGradient><linearGradient id="gWm2" x1="0" x2="1" y1="0" y2="1"><stop offset="0" stop-color="#f9b81c"/><stop offset="1" stop-color="#f07a1c"/></linearGradient></defs><g transform=""><path d="M891.2,517.4 L893.2,517.4 L893.4,536.6 L906,537.4 L908,539.8 L891.2,539.8 Z" fill="url(#gWm)"/><path d="M894.6,512.4 L898,514.6 L898.4,535.4 L907,537 L905.6,538 L894.8,537 Z" fill="url(#gWm)"/><path d="M899,508.4 L902,511 L902.6,533 L908.6,536.6 L906.8,537.4 L899.4,534.4 Z" fill="url(#gWm)"/></g><g transform="translate(1827.2,0) scale(-1,1)"><path d="M891.2,517.4 L893.2,517.4 L893.4,536.6 L906,537.4 L908,539.8 L891.2,539.8 Z" fill="url(#gWm)"/><path d="M894.6,512.4 L898,514.6 L898.4,535.4 L907,537 L905.6,538 L894.8,537 Z" fill="url(#gWm)"/><path d="M899,508.4 L902,511 L902.6,533 L908.6,536.6 L906.8,537.4 L899.4,534.4 Z" fill="url(#gWm)"/></g><rect x="908.6" y="537" width="9.6" height="2.6" rx="1.2" fill="#f5901c"/><path d="M914,510 C905,510.6 901.6,520 906.6,526.4 C906.2,521 909,517.4 912.4,518 L912.4,536.6 C912.8,536.8 913.6,536.8 914,536.6 Z" fill="url(#gWm2)"/><path d="M914,536.4 C923,535.4 925.6,525.6 920.4,519.6 C921,524.6 918.6,528.4 914,529.4 Z" fill="url(#gWm)"/><text x="946.8" y="528" font-family="Liberation Sans, Noto Sans CJK SC, sans-serif" font-size="16.5" fill="#f5821e">智造资料网</text><text x="947" y="538.2" font-family="Liberation Sans, sans-serif" font-size="4.7" font-weight="bold" fill="#d87c18" textLength="82" lengthAdjust="spacingAndGlyphs">INTELLIGENT MANUFACTURING DATA</text></g>
</svg>
<svg width="0" height="0" style="position:absolute"><defs><radialGradient id="gGreenTop" cx="0.5" cy="0.35" r="0.6"><stop offset="0" stop-color="#86f468"/><stop offset="1" stop-color="#22b422"/></radialGradient><linearGradient id="gGreenL" x1="0" x2="1" y1="0" y2="0"><stop offset="0" stop-color="#14a414"/><stop offset="0.5" stop-color="#4ad63e"/><stop offset="1" stop-color="#1cae1c"/></linearGradient><linearGradient id="gGreenR" x1="0" x2="1" y1="0" y2="0"><stop offset="0" stop-color="#9cf870"/><stop offset="0.5" stop-color="#4ad63e"/><stop offset="1" stop-color="#14a414"/></linearGradient></defs></svg><div class="vb" style="left:64px;top:113px"><svg width="24" height="24" viewBox="0 0 24 24" style="display:block"><rect x="3.4" y="4" width="17.5" height="3.8" rx="0.6" fill="#46609a"/><rect x="4.2" y="5.3" width="1.2" height="1.2" fill="#6a84ba"/><rect x="18.8" y="5.3" width="1.2" height="1.2" fill="#6a84ba"/><rect x="3.4" y="10.1" width="17.5" height="3.8" rx="0.6" fill="#46609a"/><rect x="4.2" y="11.4" width="1.2" height="1.2" fill="#6a84ba"/><rect x="18.8" y="11.4" width="1.2" height="1.2" fill="#6a84ba"/><rect x="3.4" y="16.1" width="17.5" height="3.8" rx="0.6" fill="#46609a"/><rect x="4.2" y="17.400000000000002" width="1.2" height="1.2" fill="#6a84ba"/><rect x="18.8" y="17.400000000000002" width="1.2" height="1.2" fill="#6a84ba"/></svg></div><div class="vb" style="left:92px;top:113px"><svg width="24" height="24" viewBox="0 0 24 24" style="display:block"><rect x="6.6" y="7.6" width="11.8" height="9.8" fill="url(#gDoc)" stroke="#8a8a8a" stroke-width="0.8"/><rect x="7.2" y="8.2" width="10.6" height="8.6" fill="url(#gFit)"/><defs><linearGradient id="gFit" x1="0" x2="1" y1="0" y2="1"><stop offset="0" stop-color="#fffff0"/><stop offset="1" stop-color="#b8ccf4"/></linearGradient></defs><path d="M3.6,4.6 L5.6,6.6" stroke="#48c028" stroke-width="1.6"/><polygon points="6.8,7.8 6.8,4.6 3.6,7.8" fill="#48c028"/><path d="M20.4,4.6 L18.4,6.6" stroke="#48c028" stroke-width="1.6"/><polygon points="17.2,7.8 17.2,4.6 20.4,7.8" fill="#48c028"/><path d="M3.6,20.4 L5.6,18.4" stroke="#48c028" stroke-width="1.6"/><polygon points="6.8,17.2 6.8,20.4 3.6,17.2" fill="#48c028"/><path d="M20.4,20.4 L18.4,18.4" stroke="#48c028" stroke-width="1.6"/><polygon points="17.2,17.2 17.2,20.4 20.4,17.2" fill="#48c028"/></svg></div><div class="vb" style="left:120px;top:113px"><svg width="24" height="24" viewBox="0 0 24 24" style="display:block"><path d="M6.4,17 L10,13.4 M5.8,12.8 L8.6,10.2 M7.4,21 L12,16.6" stroke="#c8ccd8" stroke-width="1.6" stroke-linecap="round"/><path d="M7.4,21 L12,16.6" stroke="#e8e8ec" stroke-width="2.2" stroke-linecap="round"/><circle cx="11.6" cy="9.6" r="4.6" fill="#b8c8e4" opacity="0.55"/><circle cx="13.2" cy="10.4" r="4.8" fill="#c4d4ee" opacity="0.6"/><circle cx="15.6" cy="11.6" r="5" fill="url(#gLens)" stroke="#5a8ed8" stroke-width="1.3"/><ellipse cx="14.6" cy="10.2" rx="2.6" ry="1.8" fill="#fff" opacity="0.8"/></svg></div><div class="vb" style="left:148px;top:113px"><svg width="24" height="24" viewBox="0 0 24 24" style="display:block"><polygon points="2.4,13.6 12,7 21,12.6 11.4,20" fill="none" stroke="#6a6a7a" stroke-width="0.7"/><path d="M10.8,14.6 V6" stroke="#0c6cf0" stroke-width="2"/><polygon points="8.2,7.4 10.8,2.6 13.4,7.4" fill="#0c8cff"/><path d="M10.8,14.6 L18,9.4" stroke="#30b030" stroke-width="1.8"/><polygon points="20.4,7.6 19.4,11.8 16,8.2" fill="#48c038"/><path d="M10.8,14.6 L16.8,19.6" stroke="#d42020" stroke-width="2"/><polygon points="19.6,22 14.8,21 17.8,17.4" fill="#e02828"/><circle cx="10.8" cy="14.6" r="1.9" fill="#f0f0e8" stroke="#6a6a5a" stroke-width="0.6"/></svg></div><div class="vb" style="left:176px;top:113px"><svg width="24" height="24" viewBox="0 0 24 24" style="display:block"><path d="M12.5,3.4 L3.5,6.6" stroke="#0a0a0a" stroke-width="1.5" stroke-linecap="round"/><path d="M12.5,3.4 L21.6,6.6" stroke="#0a0a0a" stroke-width="1.5" stroke-linecap="round"/><path d="M3.5,6.6 L12.5,10.4" stroke="#0a0a0a" stroke-width="1.5" stroke-linecap="round"/><path d="M21.6,6.6 L12.5,10.4" stroke="#0a0a0a" stroke-width="1.5" stroke-linecap="round"/><path d="M3.5,6.6 L3.5,15.9" stroke="#0a0a0a" stroke-width="1.5" stroke-linecap="round"/><path d="M21.6,6.6 L21.6,15.9" stroke="#0a0a0a" stroke-width="1.5" stroke-linecap="round"/><path d="M12.5,10.4 L12.5,21.4" stroke="#0a0a0a" stroke-width="1.5" stroke-linecap="round"/><path d="M3.5,15.9 L12.5,21.4" stroke="#0a0a0a" stroke-width="1.5" stroke-linecap="round"/><path d="M21.6,15.9 L12.5,21.4" stroke="#0a0a0a" stroke-width="1.5" stroke-linecap="round"/><path d="M12.5,3.4 L12.5,12" stroke="#0a0a0a" stroke-width="1.5" stroke-linecap="round"/><path d="M12.5,12 L3.5,15.9" stroke="#0a0a0a" stroke-width="1.5" stroke-linecap="round"/><path d="M12.5,12 L21.6,15.9" stroke="#0a0a0a" stroke-width="1.5" stroke-linecap="round"/><polygon points="12.5,3.4 21.6,6.6 12.5,10.4 3.5,6.6" fill="url(#gGreenTop)" stroke="#17a017" stroke-width="0.9" stroke-linejoin="round"/></svg></div><div class="vb" style="left:204px;top:113px"><svg width="24" height="24" viewBox="0 0 24 24" style="display:block"><polygon points="12.5,12 21.6,15.9 12.5,21.4 3.5,15.9" fill="url(#gGreenTop)" stroke="#17a017" stroke-width="0.9" stroke-linejoin="round"/><path d="M12.5,3.4 L3.5,6.6" stroke="#0a0a0a" stroke-width="1.5" stroke-linecap="round"/><path d="M12.5,3.4 L21.6,6.6" stroke="#0a0a0a" stroke-width="1.5" stroke-linecap="round"/><path d="M3.5,6.6 L12.5,10.4" stroke="#0a0a0a" stroke-width="1.5" stroke-linecap="round"/><path d="M21.6,6.6 L12.5,10.4" stroke="#0a0a0a" stroke-width="1.5" stroke-linecap="round"/><path d="M3.5,6.6 L3.5,15.9" stroke="#0a0a0a" stroke-width="1.5" stroke-linecap="round"/><path d="M21.6,6.6 L21.6,15.9" stroke="#0a0a0a" stroke-width="1.5" stroke-linecap="round"/><path d="M12.5,10.4 L12.5,21.4" stroke="#0a0a0a" stroke-width="1.5" stroke-linecap="round"/><path d="M3.5,15.9 L12.5,21.4" stroke="#0a0a0a" stroke-width="1.5" stroke-linecap="round"/><path d="M21.6,15.9 L12.5,21.4" stroke="#0a0a0a" stroke-width="1.5" stroke-linecap="round"/><path d="M12.5,3.4 L12.5,12" stroke="#0a0a0a" stroke-width="1.5" stroke-linecap="round"/><path d="M12.5,12 L3.5,15.9" stroke="#0a0a0a" stroke-width="1.5" stroke-linecap="round"/><path d="M12.5,12 L21.6,15.9" stroke="#0a0a0a" stroke-width="1.5" stroke-linecap="round"/></svg></div><div class="vb" style="left:232px;top:113px"><svg width="24" height="24" viewBox="0 0 24 24" style="display:block"><polygon points="12.5,3.4 3.5,6.6 3.5,15.9 12.5,12" fill="url(#gGreenL)" stroke="#17a017" stroke-width="0.9" stroke-linejoin="round"/><path d="M12.5,3.4 L3.5,6.6" stroke="#0a0a0a" stroke-width="1.5" stroke-linecap="round"/><path d="M12.5,3.4 L21.6,6.6" stroke="#0a0a0a" stroke-width="1.5" stroke-linecap="round"/><path d="M3.5,6.6 L12.5,10.4" stroke="#0a0a0a" stroke-width="1.5" stroke-linecap="round"/><path d="M21.6,6.6 L12.5,10.4" stroke="#0a0a0a" stroke-width="1.5" stroke-linecap="round"/><path d="M3.5,6.6 L3.5,15.9" stroke="#0a0a0a" stroke-width="1.5" stroke-linecap="round"/><path d="M21.6,6.6 L21.6,15.9" stroke="#0a0a0a" stroke-width="1.5" stroke-linecap="round"/><path d="M12.5,10.4 L12.5,21.4" stroke="#0a0a0a" stroke-width="1.5" stroke-linecap="round"/><path d="M3.5,15.9 L12.5,21.4" stroke="#0a0a0a" stroke-width="1.5" stroke-linecap="round"/><path d="M21.6,15.9 L12.5,21.4" stroke="#0a0a0a" stroke-width="1.5" stroke-linecap="round"/><path d="M12.5,3.4 L12.5,12" stroke="#0a0a0a" stroke-width="1.5" stroke-linecap="round"/><path d="M12.5,12 L3.5,15.9" stroke="#0a0a0a" stroke-width="1.5" stroke-linecap="round"/><path d="M12.5,12 L21.6,15.9" stroke="#0a0a0a" stroke-width="1.5" stroke-linecap="round"/></svg></div><div class="vb" style="left:260px;top:113px"><svg width="24" height="24" viewBox="0 0 24 24" style="display:block"><path d="M12.5,3.4 L3.5,6.6" stroke="#0a0a0a" stroke-width="1.5" stroke-linecap="round"/><path d="M12.5,3.4 L21.6,6.6" stroke="#0a0a0a" stroke-width="1.5" stroke-linecap="round"/><path d="M3.5,6.6 L12.5,10.4" stroke="#0a0a0a" stroke-width="1.5" stroke-linecap="round"/><path d="M21.6,6.6 L12.5,10.4" stroke="#0a0a0a" stroke-width="1.5" stroke-linecap="round"/><path d="M3.5,6.6 L3.5,15.9" stroke="#0a0a0a" stroke-width="1.5" stroke-linecap="round"/><path d="M21.6,6.6 L21.6,15.9" stroke="#0a0a0a" stroke-width="1.5" stroke-linecap="round"/><path d="M12.5,10.4 L12.5,21.4" stroke="#0a0a0a" stroke-width="1.5" stroke-linecap="round"/><path d="M3.5,15.9 L12.5,21.4" stroke="#0a0a0a" stroke-width="1.5" stroke-linecap="round"/><path d="M21.6,15.9 L12.5,21.4" stroke="#0a0a0a" stroke-width="1.5" stroke-linecap="round"/><path d="M12.5,3.4 L12.5,12" stroke="#0a0a0a" stroke-width="1.5" stroke-linecap="round"/><path d="M12.5,12 L3.5,15.9" stroke="#0a0a0a" stroke-width="1.5" stroke-linecap="round"/><path d="M12.5,12 L21.6,15.9" stroke="#0a0a0a" stroke-width="1.5" stroke-linecap="round"/><polygon points="21.6,6.6 12.5,10.4 12.5,21.4 21.6,15.9" fill="url(#gGreenR)" stroke="#17a017" stroke-width="0.9" stroke-linejoin="round"/></svg></div><div class="vb" style="left:288px;top:113px"><svg width="24" height="24" viewBox="0 0 24 24" style="display:block"><path d="M12.5,3.4 L3.5,6.6" stroke="#0a0a0a" stroke-width="1.5" stroke-linecap="round"/><path d="M12.5,3.4 L21.6,6.6" stroke="#0a0a0a" stroke-width="1.5" stroke-linecap="round"/><path d="M3.5,6.6 L12.5,10.4" stroke="#0a0a0a" stroke-width="1.5" stroke-linecap="round"/><path d="M21.6,6.6 L12.5,10.4" stroke="#0a0a0a" stroke-width="1.5" stroke-linecap="round"/><path d="M3.5,6.6 L3.5,15.9" stroke="#0a0a0a" stroke-width="1.5" stroke-linecap="round"/><path d="M21.6,6.6 L21.6,15.9" stroke="#0a0a0a" stroke-width="1.5" stroke-linecap="round"/><path d="M12.5,10.4 L12.5,21.4" stroke="#0a0a0a" stroke-width="1.5" stroke-linecap="round"/><path d="M3.5,15.9 L12.5,21.4" stroke="#0a0a0a" stroke-width="1.5" stroke-linecap="round"/><path d="M21.6,15.9 L12.5,21.4" stroke="#0a0a0a" stroke-width="1.5" stroke-linecap="round"/><path d="M12.5,3.4 L12.5,12" stroke="#0a0a0a" stroke-width="1.5" stroke-linecap="round"/><path d="M12.5,12 L3.5,15.9" stroke="#0a0a0a" stroke-width="1.5" stroke-linecap="round"/><path d="M12.5,12 L21.6,15.9" stroke="#0a0a0a" stroke-width="1.5" stroke-linecap="round"/><polygon points="3.5,6.6 12.5,10.4 12.5,21.4 3.5,15.9" fill="url(#gGreenL)" stroke="#17a017" stroke-width="0.9" stroke-linejoin="round"/></svg></div><div class="vb" style="left:316px;top:113px"><svg width="24" height="24" viewBox="0 0 24 24" style="display:block"><polygon points="12.5,3.4 21.6,6.6 21.6,15.9 12.5,12" fill="url(#gGreenR)" stroke="#17a017" stroke-width="0.9" stroke-linejoin="round"/><path d="M12.5,3.4 L3.5,6.6" stroke="#0a0a0a" stroke-width="1.5" stroke-linecap="round"/><path d="M12.5,3.4 L21.6,6.6" stroke="#0a0a0a" stroke-width="1.5" stroke-linecap="round"/><path d="M3.5,6.6 L12.5,10.4" stroke="#0a0a0a" stroke-width="1.5" stroke-linecap="round"/><path d="M21.6,6.6 L12.5,10.4" stroke="#0a0a0a" stroke-width="1.5" stroke-linecap="round"/><path d="M3.5,6.6 L3.5,15.9" stroke="#0a0a0a" stroke-width="1.5" stroke-linecap="round"/><path d="M21.6,6.6 L21.6,15.9" stroke="#0a0a0a" stroke-width="1.5" stroke-linecap="round"/><path d="M12.5,10.4 L12.5,21.4" stroke="#0a0a0a" stroke-width="1.5" stroke-linecap="round"/><path d="M3.5,15.9 L12.5,21.4" stroke="#0a0a0a" stroke-width="1.5" stroke-linecap="round"/><path d="M21.6,15.9 L12.5,21.4" stroke="#0a0a0a" stroke-width="1.5" stroke-linecap="round"/><path d="M12.5,3.4 L12.5,12" stroke="#0a0a0a" stroke-width="1.5" stroke-linecap="round"/><path d="M12.5,12 L3.5,15.9" stroke="#0a0a0a" stroke-width="1.5" stroke-linecap="round"/><path d="M12.5,12 L21.6,15.9" stroke="#0a0a0a" stroke-width="1.5" stroke-linecap="round"/></svg></div><div class="vb" style="left:344px;top:113px"><svg width="24" height="24" viewBox="0 0 24 24" style="display:block"><polygon points="12.5,3.4 21.6,6.6 12.5,10.4 3.5,6.6" fill="url(#gGreenTop)" stroke="#17a017" stroke-width="0.9" stroke-linejoin="round"/><polygon points="3.5,6.6 12.5,10.4 12.5,21.4 3.5,15.9" fill="url(#gGreenL)" stroke="#17a017" stroke-width="0.9" stroke-linejoin="round"/><polygon points="21.6,6.6 12.5,10.4 12.5,21.4 21.6,15.9" fill="url(#gGreenR)" stroke="#17a017" stroke-width="0.9" stroke-linejoin="round"/></svg></div><div class="vb" style="left:64px;top:141px"><svg width="24" height="24" viewBox="0 0 24 24" style="display:block"><path d="M8.4,6.2 V18.2 A5.1,2.2 0 0 0 18.6,18.2 V6.2 A5.1,2.2 0 0 0 8.4,6.2 Z" fill="none" stroke="#1a1a1a" stroke-width="0.9"/><ellipse cx="13.5" cy="6.2" rx="5.1" ry="2.2" fill="none" stroke="#1a1a1a" stroke-width="0.9"/><path d="M8.4,18.2 A5.1,2.2 0 0 1 18.6,18.2" fill="none" stroke="#1a1a1a" stroke-width="0.7200000000000001"/></svg></div><div class="vb" style="left:64px;top:169px"><svg width="24" height="24" viewBox="0 0 24 24" style="display:block"><path d="M8.4,6.2 V18.2 A5.1,2.2 0 0 0 18.6,18.2 V6.2 A5.1,2.2 0 0 0 8.4,6.2 Z" fill="none" stroke="#1a1a1a" stroke-width="0.9"/><ellipse cx="13.5" cy="6.2" rx="5.1" ry="2.2" fill="none" stroke="#1a1a1a" stroke-width="0.9"/></svg></div><div class="vb act" style="left:64px;top:197px"><svg width="24" height="24" viewBox="0 0 24 24" style="display:block"><path d="M7.6,6.4 V17.6 A5.0,2.2 0 0 0 17.6,17.6 V6.4 A5.0,2.2 0 0 0 7.6,6.4 Z" fill="url(#gBlueCyl)" stroke="#10183a" stroke-width="1.1"/><ellipse cx="12.6" cy="6.4" rx="5.0" ry="2.2" fill="#7a9ce0" stroke="#10183a" stroke-width="1.1"/></svg></div><div class="vb" style="left:64px;top:225px"><svg width="24" height="24" viewBox="0 0 24 24" style="display:block"><path d="M7.6,6.4 V17.6 A5.0,2.2 0 0 0 17.6,17.6 V6.4 A5.0,2.2 0 0 0 7.6,6.4 Z" fill="url(#gLightCyl)" stroke="#2a2f40" stroke-width="1.0"/><ellipse cx="12.6" cy="6.4" rx="5.0" ry="2.2" fill="#eef2fa" stroke="#2a2f40" stroke-width="1.0"/><path d="M7.6,17.6 A5.0,2.2 0 0 1 17.6,17.6" fill="none" stroke="#2a2f40" stroke-width="0.8"/></svg></div><div class="vb" style="left:64px;top:253px"><svg width="24" height="24" viewBox="0 0 24 24" style="display:block"><path d="M7.6,6.4 V17.6 A5.0,2.2 0 0 0 17.6,17.6 V6.4 A5.0,2.2 0 0 0 7.6,6.4 Z" fill="#878ca6" stroke="#1a1a1a" stroke-width="1.0"/><ellipse cx="12.6" cy="6.4" rx="5.0" ry="2.2" fill="#9a9fb8" stroke="#1a1a1a" stroke-width="1.0"/><path d="M7.6,17.6 A5.0,2.2 0 0 1 17.6,17.6" fill="none" stroke="#1a1a1a" stroke-width="0.8"/><path d="M9.4,7 L11.4,20 M12,7 L10,19 M13.8,7 L15.8,20 M15.8,7 L13.8,20" stroke="#1a1a1a" stroke-width="0.7" fill="none"/></svg></div>
<div class="abs" id="leftpanel"><div class="hgrips" style="top:3px"></div><div class="hgrip" style="top:2px"></div><div class="hgrips" style="top:256px"></div><div class="hgrip" style="top:255px"></div></div>
<svg class="abs" style="left:0;top:118px" width="60" height="260" viewBox="0 118 60 260"><g transform="translate(7,133)"><path d="M9.0,13.4 L3.4,18.6" stroke="#8a8a8a" stroke-width="3" stroke-linecap="round"/><path d="M9.0,13.4 L3.4,18.6" stroke="#e4e4e4" stroke-width="1.4" stroke-linecap="round"/><circle cx="12" cy="10.4" r="5" fill="url(#gLens)" stroke="#6d9be0" stroke-width="1.3"/><circle cx="12" cy="10.4" r="5.9" fill="none" stroke="#c8cbd6" stroke-width="0.7"/><path d="M2.6,5.6 C4.6,3.6 6.4,3.6 7.6,4.6 M2.2,9.6 C4,7.8 5.4,7.8 6.6,8.6 M2.6,13.4 C4,12.2 5.4,12.2 6.4,12.8" stroke="#9aa6c2" stroke-width="1" fill="none"/></g><g transform="translate(34,133)"><path d="M2,3 L18,19 M2,9 L12,19 M8,3 L18,13" stroke="#2c6cdc" stroke-width="1.1"/><g transform="translate(3.6,2)"><path d="M2.4,14.6 L12.6,2.6" stroke="#c07828" stroke-width="3.2"/><path d="M2.4,14.6 L12.6,2.6" stroke="#f0c070" stroke-width="1.2"/><path d="M11.6,3.8 L13.8,1.2" stroke="#d02020" stroke-width="3"/><polygon points="0.6,16.8 1.2,12.8 4.2,15.4" fill="#f0dcb0" stroke="#6a4a20" stroke-width="0.5"/><polygon points="0.6,16.8 0.9,15 2.2,16.1" fill="#222"/></g><polygon points="14.2,0 19.2,0 16.7,3" fill="#000"/></g><g transform="translate(7,159)"><rect x="4" y="4.6" width="12.6" height="11.4" fill="url(#gDoc)" stroke="#555" stroke-width="0.9"/><path d="M0.9999999999999998,1.5999999999999999 L4.6,5.2 M4.6,1.5999999999999999 L0.9999999999999998,5.2" stroke="#3aa025" stroke-width="1.7"/><rect x="1.5999999999999999" y="2.2" width="2.4" height="2.4" fill="#59c83a"/><path d="M16.0,1.5999999999999999 L19.6,5.2 M19.6,1.5999999999999999 L16.0,5.2" stroke="#3aa025" stroke-width="1.7"/><rect x="16.6" y="2.2" width="2.4" height="2.4" fill="#59c83a"/><path d="M0.9999999999999998,15.399999999999999 L4.6,19.0 M4.6,15.399999999999999 L0.9999999999999998,19.0" stroke="#3aa025" stroke-width="1.7"/><rect x="1.5999999999999999" y="16.0" width="2.4" height="2.4" fill="#59c83a"/><path d="M16.0,15.399999999999999 L19.6,19.0 M19.6,15.399999999999999 L16.0,19.0" stroke="#3aa025" stroke-width="1.7"/><rect x="16.6" y="16.0" width="2.4" height="2.4" fill="#59c83a"/></g><g transform="translate(34,159)"><path d="M2,8 C2,2 12,2 10,9 C8,16 18,17 18,10" stroke="#2c6cdc" stroke-width="1.6" fill="none"/><g transform="translate(3.6,2)"><path d="M2.4,14.6 L12.6,2.6" stroke="#c07828" stroke-width="3.2"/><path d="M2.4,14.6 L12.6,2.6" stroke="#f0c070" stroke-width="1.2"/><path d="M11.6,3.8 L13.8,1.2" stroke="#d02020" stroke-width="3"/><polygon points="0.6,16.8 1.2,12.8 4.2,15.4" fill="#f0dcb0" stroke="#6a4a20" stroke-width="0.5"/><polygon points="0.6,16.8 0.9,15 2.2,16.1" fill="#222"/></g><polygon points="14.2,0 19.2,0 16.7,3" fill="#000"/></g><g transform="translate(7,185)"><g transform="translate(9.6,9) scale(1.0)"><polygon points="0,2.6 5,0 10,2.6 5,5.2" fill="#c4c4c4" stroke="#222" stroke-width="0.7"/><polygon points="0,2.6 5,5.2 5,11 0,8.2" fill="#8a8a88" stroke="#222" stroke-width="0.7"/><polygon points="10,2.6 5,5.2 5,11 10,8.2" fill="#5c5c5a" stroke="#222" stroke-width="0.7"/></g><path d="M8.64,10.16 L3,16.2" stroke="#8a8a8a" stroke-width="3" stroke-linecap="round"/><path d="M8.64,10.16 L3,16.2" stroke="#e4e4e4" stroke-width="1.4" stroke-linecap="round"/><circle cx="11.4" cy="7.4" r="4.6" fill="url(#gLens)" stroke="#6d9be0" stroke-width="1.3"/><circle cx="11.4" cy="7.4" r="5.5" fill="none" stroke="#c8cbd6" stroke-width="0.7"/><polygon points="10.2,5.2 13.8,7.6 10.2,10" fill="#b6c4d8" stroke="#8ea0ba" stroke-width="0.5"/><path d="M0.6,2.6 H3.6 M2.1,1.1 V4.1 M0.6,5.6 H3.6" stroke="#111" stroke-width="0.9"/><polygon points="15.6,0 20.6,0 18.1,3" fill="#000"/></g><g transform="translate(34,185)"><path d="M2.4,4 H17 V10 H13.6 V14.4 H15.4 V18.4 H2.4 Z" fill="none" stroke="#f0e810" stroke-width="1.6"/><path d="M5.4,11 L9,15.6 L16,5.4" stroke="#2f9a24" stroke-width="3" fill="none"/><path d="M5.4,10.6 L9,15 L16,5" stroke="#56cc36" stroke-width="1.6" fill="none"/><polygon points="14.2,0 19.2,0 16.7,3" fill="#000"/></g><g transform="translate(7,211)"><polygon points="0.6,13 10,7 19,12 10,19" fill="#e8eef8" stroke="#b8c2d6" stroke-width="0.6"/><path d="M6.4,13.2 V4" stroke="#1c5ce0" stroke-width="1.6"/><polygon points="4.2,5 6.4,0.6 8.6,5" fill="#1c8cf0"/><path d="M6.4,13.2 L14,7.4" stroke="#3aa82c" stroke-width="1.7"/><polygon points="16.2,5.6 15.2,9.8 12,6" fill="#3aa82c"/><path d="M6.4,13.2 L13,18" stroke="#d42020" stroke-width="1.7"/><polygon points="15.2,19.6 11,19 13.6,15.6" fill="#d42020"/><circle cx="6.4" cy="13.2" r="1.7" fill="#e8e8e8" stroke="#444" stroke-width="0.6"/><polygon points="15.6,0 20.6,0 18.1,3" fill="#000"/></g><g transform="translate(34,211)"><path d="M1.6,16 C4,2 9,2 10.4,10 C12,18 16,18 18.6,6" stroke="#2c6cdc" stroke-width="1.6" fill="none"/><g transform="translate(3.6,2)"><path d="M2.4,14.6 L12.6,2.6" stroke="#c07828" stroke-width="3.2"/><path d="M2.4,14.6 L12.6,2.6" stroke="#f0c070" stroke-width="1.2"/><path d="M11.6,3.8 L13.8,1.2" stroke="#d02020" stroke-width="3"/><polygon points="0.6,16.8 1.2,12.8 4.2,15.4" fill="#f0dcb0" stroke="#6a4a20" stroke-width="0.5"/><polygon points="0.6,16.8 0.9,15 2.2,16.1" fill="#222"/></g><polygon points="14.2,0 19.2,0 16.7,3" fill="#000"/></g><g transform="translate(7,237)"><path d="M1,3.2 L9.5,3.2 L12.5,5.8 L3.2,5.8 Z" fill="#6f7df2" stroke="#4c57c8" stroke-width="0.5"/><path d="M1.2,6.6 L9.8,6.6 L12,8.8 L3,8.8 Z" fill="#e6e6ea" stroke="#7a7a80" stroke-width="0.5"/><path d="M1.2,9.6 L9.8,9.6 L11.6,11.8 L3,11.8 Z" fill="#e6e6ea" stroke="#7a7a80" stroke-width="0.5"/><ellipse cx="10.6" cy="15.6" rx="7.2" ry="4.4" fill="#c9a07c" stroke="#7d5a40" stroke-width="0.8"/><ellipse cx="14.4" cy="13.4" rx="2" ry="1.6" fill="#d81d1d"/><ellipse cx="8" cy="16.6" rx="2.1" ry="1.5" fill="#1d46e0"/><ellipse cx="12.6" cy="16.8" rx="2" ry="1.4" fill="#16b01c"/><path d="M17.4,3 L11.6,12.4" stroke="#b8631c" stroke-width="1.7" stroke-linecap="round"/><polygon points="15.6,0 20.6,0 18.1,3" fill="#000"/></g><g transform="translate(34,237)"><polygon points="5,3 19,1.4 14.6,16.4 0.8,18.6" fill="#9cc0f4" stroke="#2c6cdc" stroke-width="1.3"/><path d="M11.8,2.4 L7.6,17.4 M3.4,9.8 L17,7.8" stroke="#e8f0fc" stroke-width="1.3"/><polygon points="14.2,0 19.2,0 16.7,3" fill="#000"/></g><g transform="translate(7,263)"><g transform="rotate(-30 10 10.6)"><path d="M4.74,8.68 A5.6,5.6 0 0 1 14.85,7.80" fill="none" stroke="#4f8ed6" stroke-width="4.6"/><polygon points="19.03,5.38 10.67,10.21 16.92,11.39" fill="#4f8ed6"/><path d="M15.26,12.52 A5.6,5.6 0 0 1 5.15,13.40" fill="none" stroke="#7fb2ea" stroke-width="4.6"/><polygon points="0.97,15.81 9.33,10.98 3.08,9.81" fill="#7fb2ea"/></g><polygon points="15.6,0 20.6,0 18.1,3" fill="#000"/></g><g transform="translate(34,263)"><ellipse cx="11" cy="18.6" rx="6" ry="1.6" fill="#000" opacity="0.22"/><g transform="translate(1.2,2.2) scale(1.52)"><polygon points="0,2.6 5,0 10,2.6 5,5.2" fill="#d6d6d2" stroke="#4a4a48" stroke-width="0.5"/><polygon points="0,2.6 5,5.2 5,11 0,8.2" fill="#9a9a96" stroke="#4a4a48" stroke-width="0.5"/><polygon points="10,2.6 5,5.2 5,11 10,8.2" fill="#6a6a66" stroke="#4a4a48" stroke-width="0.5"/></g><polygon points="14.2,0 19.2,0 16.7,3" fill="#000"/></g><g transform="translate(7,289)"><text x="3.6" y="16.4" font-family="Liberation Sans, sans-serif" font-size="20" font-weight="bold" fill="#4a7cd0" stroke="#2c4c8c" stroke-width="0.5">?</text><ellipse cx="9.6" cy="19" rx="5" ry="1.2" fill="#000" opacity="0.2"/><polygon points="15.6,0 20.6,0 18.1,3" fill="#000"/></g><g transform="translate(34,289)"><path d="M2.6,4.6 V19 M17.6,4.6 V19" stroke="#1a1a1a" stroke-width="1.3"/><path d="M4,7.6 H16" stroke="#e8d810" stroke-width="1.8"/><polygon points="2.8,7.6 6,5.6 6,9.6" fill="#e8d810"/><polygon points="17.4,7.6 14.2,5.6 14.2,9.6" fill="#e8d810"/><polygon points="14.2,0 19.2,0 16.7,3" fill="#000"/></g><g transform="translate(7,315)"><path d="M4,6.6 H16 L14.6,19 H5.4 Z" fill="#b6d6f0" stroke="#5a7a9a" stroke-width="0.9"/><ellipse cx="10" cy="6.6" rx="6.4" ry="1.8" fill="#d8ecfa" stroke="#5a7a9a" stroke-width="0.8"/><path d="M7,9 L8,17 M10,9.4 V17.4 M13,9 L12,17" stroke="#8ac24a" stroke-width="1"/><path d="M7.6,3 L10,0.6 L12.4,3 L10,5.6 Z" fill="#444"/><path d="M10,2 L11,4.4 H9 Z" fill="#e8d810"/><polygon points="15.6,0 20.6,0 18.1,3" fill="#000"/></g><g transform="translate(34,315)"><g transform="translate(2,2.6) scale(0.95)"><path d="M0,6.6 L7.4,0 L7.6,4.2 C13.6,4.2 16.2,9.6 12.4,15.6 C9.6,18.2 7.4,17.6 7.4,17.6 C10.6,13.4 10.4,9.6 7.6,9.4 L7.6,13.2 Z" fill="url(#gGreyArrow)" stroke="#8a8a8a" stroke-width="0.6"/></g><polygon points="14.2,0 19.2,0 16.7,3" fill="#000"/></g><g transform="translate(7,341)"><rect x="1.4" y="1.6" width="2.6" height="13" fill="#7a8088" stroke="#333" stroke-width="0.5"/><path d="M0.4,15 H5 L2.7,19.4 Z" fill="#e87010"/><circle cx="11.4" cy="10.6" r="5.6" fill="none" stroke="#8a5a2c" stroke-width="1.4"/><path d="M11.4,2.6 V18.6 M3.4,10.6 H19.4 M5.8,5 L17,16.2 M17,5 L5.8,16.2" stroke="#8a5a2c" stroke-width="1.1"/><circle cx="11.4" cy="10.6" r="1.8" fill="#e8a040"/><path d="M4,17 L9,15.6 L14,17.6 L19,16.2 L19.4,19 L5,20 Z" fill="#f08a1c" opacity="0.9"/><polygon points="15.6,0 20.6,0 18.1,3" fill="#000"/></g><g transform="translate(34,341)"><path d="M6.6,8.6 H15.6 L19.6,12.4 V20 H6.6 Z" fill="#fafafa" stroke="#111" stroke-width="1.2"/><path d="M1,5.6 L7,4 L8.6,5.6 L16,5.2 L15,13.4 L1.6,15.6 Z" fill="url(#gFolder)" stroke="#c89a30" stroke-width="0.7"/><path d="M1.6,15.6 L4.4,9 L17.6,7.6 L15,13.4 Z" fill="#fbe08a" stroke="#c89a30" stroke-width="0.7"/><path d="M8,5 C9,2.6 12,2 14,3.6" stroke="#2ea02a" stroke-width="2" fill="none"/><polygon points="16.4,1.6 15.8,7 11.6,4.4" fill="#2ea02a"/></g></svg>
<div class="abs" id="status"></div>
<div class="abs" style="left:2px;top:1020px;width:1915px;height:1px;background:#9c9c9c"></div><div class="abs" style="left:1336px;top:1004px;width:1px;height:15px;background-image:repeating-linear-gradient(to bottom,#b9becd 0,#b9becd 1px,transparent 1px,transparent 2px)"></div><div class="abs" style="left:1338px;top:1005px;width:1px;height:14px;background-image:repeating-linear-gradient(to bottom,#b9becd 0,#b9becd 1px,transparent 1px,transparent 2px)"></div><div class="abs" style="left:1341px;top:1003px;width:131px;height:16px;background:#fff"></div><svg class="abs" style="left:1460px;top:1002px" width="12" height="16"><circle cx="7.6" cy="8" r="3.4" fill="none" stroke="#4a7cd0" stroke-width="1.2"/></svg><div class="abs" style="left:1476px;top:1004px;width:1px;height:15px;background-image:repeating-linear-gradient(to bottom,#b9becd 0,#b9becd 1px,transparent 1px,transparent 2px)"></div><div class="abs" style="left:1478px;top:1005px;width:1px;height:14px;background-image:repeating-linear-gradient(to bottom,#b9becd 0,#b9becd 1px,transparent 1px,transparent 2px)"></div><svg class="abs" style="left:1484px;top:1001px" width="88" height="22" viewBox="1484 1001 88 22"><text class="tx" y="1016"><tspan x="1486">绝对</tspan><tspan x="1513.33">X</tspan><tspan x="1521.34">Y</tspan><tspan x="1533">上视图</tspan></text></svg><svg class="abs" style="left:1599px;top:1001px" width="53" height="22" viewBox="1599 1001 53 22"><text class="tx" x="1601" y="1016">绝对视图</text></svg><div class="abs" style="left:1657px;top:1004px;width:1px;height:15px;background-image:repeating-linear-gradient(to bottom,#b9becd 0,#b9becd 1px,transparent 1px,transparent 2px)"></div><div class="abs" style="left:1659px;top:1005px;width:1px;height:14px;background-image:repeating-linear-gradient(to bottom,#b9becd 0,#b9becd 1px,transparent 1px,transparent 2px)"></div><div class="st" id="s_layer" style="left:1668px;top:1004px;font-weight:bold;font-size:12px">LAYER0</div><div class="sep" style="left:1592px;top:1003px;height:15px"></div><div class="sep" style="left:1726px;top:1003px;height:15px"></div><div class="sep" style="left:1757px;top:1003px;height:15px"></div><div class="sep" style="left:1800px;top:1003px;height:15px"></div><div class="sep" style="left:1843px;top:1003px;height:15px"></div><div class="sep" style="left:1887px;top:1003px;height:15px"></div><div class="abs" style="left:1762px;top:1005px;width:32px;height:12px;background:#47648d"></div><div class="abs" style="left:1805px;top:1005px;width:32px;height:12px;background:#47648d"></div><div class="abs" style="left:1848px;top:1005px;width:32px;height:12px;background:#47648d"></div><svg class="abs" style="left:1891px;top:1001px" width="20" height="18"><circle cx="9.4" cy="8.2" r="6.4" fill="#1c3cc0" stroke="#0c1c4c" stroke-width="1"/><path d="M5,4.4 C7,2.6 10,4 9,6.6 C8,8.8 5.4,8 4.4,10.4 C3.4,8 3.6,6 5,4.4 Z M10.4,9 C12.4,8 14,9.6 13,11.6 C12,13 10.4,12.6 10.4,11 Z M10.6,2.6 C12.6,2.8 14.4,4.4 15,6.4 C13.4,6.4 11.4,5 10.6,2.6 Z" fill="#2cc82c"/></svg><svg class="abs" style="left:1139px;top:1021px" width="29" height="22" viewBox="1139 1021 29 22"><text class="tx" x="1141" y="1036">拴牢</text></svg><div class="sep" style="left:1132px;top:1024px;height:14px"></div><div class="sep" style="left:1175px;top:1024px;height:14px"></div><div class="sep" style="left:1206px;top:1024px;height:14px"></div><div class="sep" style="left:1237px;top:1024px;height:14px"></div><div class="sep" style="left:1268px;top:1024px;height:14px"></div><div class="sep" style="left:1299px;top:1024px;height:14px"></div><div class="sep" style="left:1330px;top:1024px;height:14px"></div><div class="sep" style="left:1361px;top:1024px;height:14px"></div><div class="sep" style="left:1392px;top:1024px;height:14px"></div><div class="sep" style="left:1423px;top:1024px;height:14px"></div><div class="sep" style="left:1454px;top:1024px;height:14px"></div><svg class="abs" style="left:1180px;top:1021px" width="190" height="20" viewBox="1180 1021 190 20"><rect x="1182.5" y="1022.5" width="15" height="15.5" fill="#cfc6dc" stroke="#85879e" stroke-width="1.2"/><g transform="rotate(-30 1190 1030.4)"><path d="M1185.87,1028.90 A4.4,4.4 0 0 1 1193.81,1028.20" fill="none" stroke="#e0485c" stroke-width="2.6"/><polygon points="1196.17,1026.84 1191.45,1029.57 1194.98,1030.23" fill="#e0485c"/><path d="M1194.13,1031.90 A4.4,4.4 0 0 1 1186.19,1032.60" fill="none" stroke="#e86a7a" stroke-width="2.6"/><polygon points="1183.83,1033.97 1188.55,1031.24 1185.02,1030.57" fill="#e86a7a"/></g><rect x="1212" y="1021.5" width="18" height="17" fill="#fbe27e"/><path d="M1214,1024 L1219,1022.4 L1221,1025.6 L1225,1023.6 L1224.6,1028.6 L1228,1031 L1222,1032 L1219,1036 L1217.6,1030.6 L1213,1029 L1216.6,1027 Z" fill="#c04ad0" opacity="0.85"/><circle cx="1217.6" cy="1026.4" r="2" fill="#f8e040"/><path d="M1219.6,1027.6 L1220,1035.4 L1222.2,1033.6 L1225.6,1038 L1227.6,1036.6 L1224.4,1032.4 L1227,1031.4 Z" fill="#e8e8ec" stroke="#8a8a92" stroke-width="0.6"/><rect x="1246.5" y="1028" width="9" height="9.5" fill="#e8ecf8" stroke="#6a7898" stroke-width="0.9"/><path d="M1248,1031 H1254 M1248,1034 H1254 M1251,1029 V1037" stroke="#3a6ad0" stroke-width="0.9"/><path d="M1247,1028 L1252,1023.6 L1258.6,1023 L1260,1026 L1256,1028.4 L1252.6,1028 L1250,1030 Z" fill="#e8bc78" stroke="#9a6c2c" stroke-width="0.6"/><path d="M1250.6,1026 L1254.6,1028 M1252.6,1024.6 L1256.4,1027" stroke="#9a6c2c" stroke-width="0.5"/><ellipse cx="1285" cy="1037.4" rx="5.4" ry="1.3" fill="#000" opacity="0.22"/><text x="1278" y="1036.6" font-family="Liberation Sans, sans-serif" font-size="17" font-weight="bold" fill="#4a7cd0" stroke="#2c4c8c" stroke-width="0.4">?</text><polygon points="1308,1027 1313,1024.6 1318,1027 1313,1029.6" fill="#7ab0f0" stroke="#1c2c5c" stroke-width="0.6"/><polygon points="1308,1027 1313,1029.6 1313,1035.6 1308,1033" fill="#3c6cc8" stroke="#1c2c5c" stroke-width="0.6"/><polygon points="1318,1027 1313,1029.6 1313,1035.6 1318,1033" fill="#24449c" stroke="#1c2c5c" stroke-width="0.6"/><polygon points="1314,1030.6 1319,1028.2 1324,1030.6 1319,1033.2" fill="#d8d8d8" stroke="#333" stroke-width="0.6"/><polygon points="1314,1030.6 1319,1033.2 1319,1039 1314,1036.6" fill="#9a9a9a" stroke="#333" stroke-width="0.6"/><polygon points="1324,1030.6 1319,1033.2 1319,1039 1324,1036.6" fill="#6a6a6a" stroke="#333" stroke-width="0.6"/><path d="M1304,1033 H1311" stroke="#e01010" stroke-width="1.8"/><polygon points="1313,1033 1309.6,1030.6 1309.6,1035.4" fill="#e01010"/><rect x="1336" y="1021.5" width="18" height="17" fill="#f8e07c"/><polygon points="1338,1026.4 1345,1023.6 1352,1026.4 1345,1029.4" fill="#e040e0" stroke="#3c2c9c" stroke-width="0.7"/><polygon points="1338,1026.4 1345,1029.4 1345,1037.6 1338,1034" fill="#9aa8a8" stroke="#2c4cc0" stroke-width="0.9"/><polygon points="1352,1026.4 1345,1029.4 1345,1037.6 1352,1034" fill="#7a8c98" stroke="#2c4cc0" stroke-width="0.9"/></svg><div class="st" id="s_ls" style="left:1464px;top:1024px;font-size:12px;letter-spacing:-0.18px">LS: 1.00 PS: 1.00</div><svg class="abs" style="left:1587px;top:1021px" width="60" height="22" viewBox="1587 1021 60 22"><text class="tx" y="1036"><tspan x="1589">单位</tspan><tspan x="1613">:</tspan><tspan x="1620">毫米</tspan></text></svg><div class="st" id="s_xyz" style="left:1663px;top:1024px;font-size:13px;letter-spacing:-0.06px"><span style="color:#f01818">X =-05064.43 Y =-12785.80</span> Z = 00000.00</div><div class="sep" style="left:1580px;top:1024px;height:14px"></div><div class="sep" style="left:1654px;top:1024px;height:14px"></div><svg class="abs" style="left:1360px;top:1021px" width="110" height="20" viewBox="1360 1021 110 20"><rect x="1371.5" y="1029" width="9" height="8.5" fill="#e8ecf4" stroke="#5a6a5a" stroke-width="1.2"/><circle cx="1407.5" cy="1030" r="7" fill="none" stroke="#2f9a24" stroke-width="2"/><circle cx="1407.5" cy="1032.4" r="1.3" fill="#2c3c9c"/><rect x="1430.5" y="1029" width="15" height="9" fill="#e8ecf4" stroke="#6a6a8a" stroke-width="1.2"/><path d="M1438,1029 V1038" stroke="#6a6a8a" stroke-width="1.2"/></svg><div class="abs" style="left:1382px;top:1009.5px;width:183.5px;height:22.5px;background:#fff;border:1px solid #d6d6d6;border-radius:3px"></div><svg class="abs" style="left:1340px;top:1000px" width="232" height="40" viewBox="1340 1000 232 40"><g transform="rotate(-9 1373 1019.6)"><rect x="1360.6" y="1007.6" width="24.8" height="24" rx="4.6" fill="#f2561e"/><path d="M1380.4,1013.4 C1377,1010.6 1367,1010.6 1366.4,1015.6 C1366,1020.6 1380.6,1018.4 1380,1023.6 C1379.4,1028.4 1369,1028.6 1365.4,1025.4" stroke="#fff" stroke-width="3.4" fill="none" stroke-linecap="round"/></g><g stroke="#1f6fd8" fill="none" stroke-width="1.7"><rect x="1394.4" y="1016.4" width="11.6" height="6.8"/><path d="M1400.2,1013.4 V1027.4"/></g><circle cx="1418" cy="1017.6" r="1.5" fill="none" stroke="#1f6fd8" stroke-width="1.1"/><path d="M1425.4,1021.4 C1426.6,1022.6 1426,1024.6 1423.6,1025.6" stroke="#1f6fd8" stroke-width="1.7" fill="none"/><circle cx="1424.8" cy="1021.2" r="1.4" fill="#1f6fd8"/><circle cx="1444" cy="1020.6" r="7" fill="none" stroke="#1f6fd8" stroke-width="1.5"/><circle cx="1441.6" cy="1018.8" r="0.95" fill="#1f6fd8"/><circle cx="1446.4" cy="1018.8" r="0.95" fill="#1f6fd8"/><path d="M1440.4,1022.4 C1442,1025.4 1446,1025.4 1447.6,1022.4" stroke="#1f6fd8" stroke-width="1.2" fill="none"/><rect x="1463" y="1012.6" width="5.8" height="10.4" rx="2.9" fill="#1f6fd8"/><path d="M1460.6,1019.6 C1460.6,1026.4 1471.2,1026.4 1471.2,1019.6 M1465.9,1024.8 V1028.2 M1463,1028.4 H1468.8" stroke="#1f6fd8" stroke-width="1.3" fill="none"/><rect x="1480" y="1014.8" width="16.2" height="11.8" rx="1.6" fill="#1f6fd8"/><path d="M1482.6,1017.8 H1493.8 M1482.6,1020.6 H1493.8" stroke="#fff" stroke-width="1.3" stroke-dasharray="1.6,1.4"/><path d="M1485,1023.8 H1491.4" stroke="#fff" stroke-width="1.3"/><circle cx="1510.4" cy="1016.6" r="3.1" fill="#c8cad0"/><path d="M1504,1027.4 C1504.4,1021.2 1516.4,1021.2 1516.8,1027.4 Z" fill="#c8cad0"/><circle cx="1514.8" cy="1025.6" r="3" fill="#eeeff3" stroke="#c8cad0" stroke-width="0.6"/><path d="M1528.4,1013.8 L1524.6,1016.2 L1526.2,1019.6 L1528,1018.8 V1027.6 H1537 V1018.8 L1538.8,1019.6 L1540.4,1016.2 L1536.6,1013.8 C1535.2,1015.8 1529.8,1015.8 1528.4,1013.8 Z" fill="#1f6fd8"/><rect x="1547.4" y="1014.6" width="5.6" height="5.6" fill="#1f6fd8"/><rect x="1555.4" y="1014.6" width="5.2" height="5.2" fill="none" stroke="#1f6fd8" stroke-width="1"/><rect x="1547.4" y="1022" width="5.6" height="5.6" fill="#1f6fd8"/><rect x="1555" y="1022" width="5.6" height="5.6" fill="#1f6fd8"/></svg><div class="abs" style="left:1816px;top:1043.6px;font-size:12px;line-height:12px;color:#fff;height:4.4px;overflow:hidden;letter-spacing:0.3px">15:28</div><div class="abs" style="left:1915.5px;top:1041px;width:1px;height:7px;background:#8a8a8a"></div>
<div class="abs" id="taskbar"></div>
<div class="abs" style="left:48px;top:1041px;width:344px;height:7px;background:#f2f2f2"></div>
<div class="abs" style="left:589px;top:1040px;width:48px;height:8px;background:#4a4a4a"></div>
</body></html>
